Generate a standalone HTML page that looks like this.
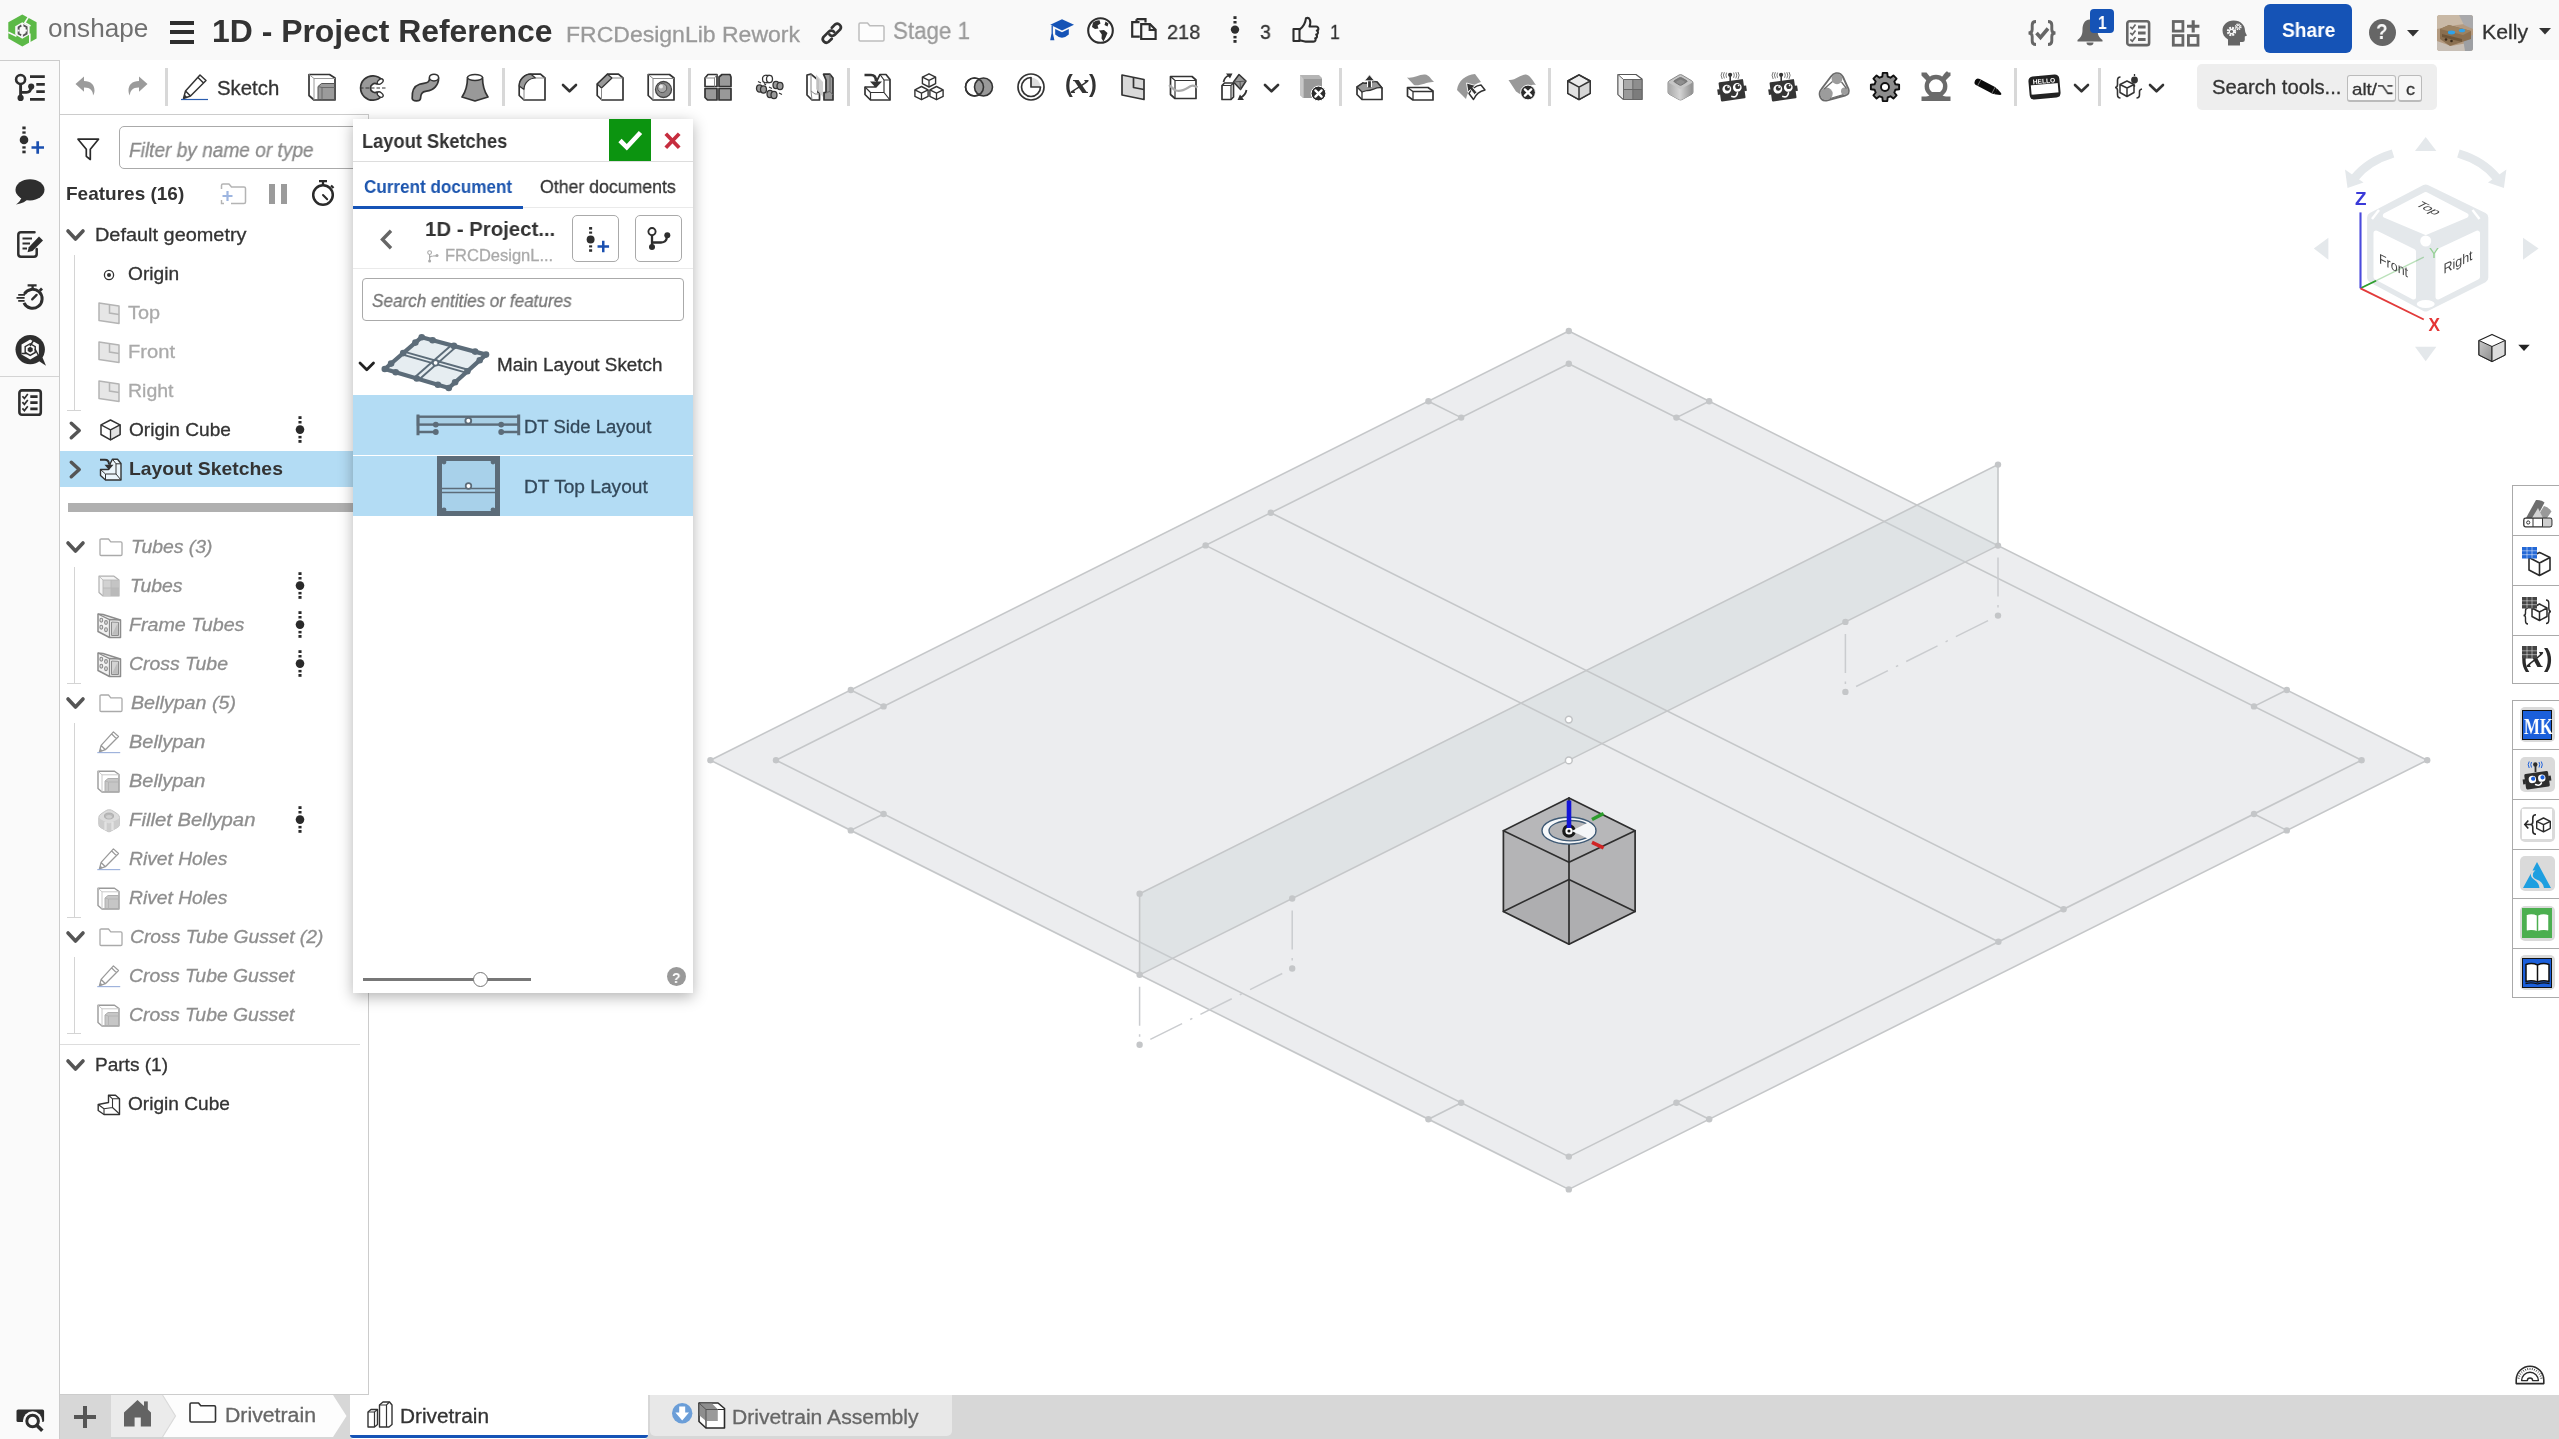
<!DOCTYPE html>
<html lang="en"><head><meta charset="utf-8"><title>1D - Project Reference | Drivetrain</title>
<style>
html,body{margin:0;padding:0;}
body{width:2559px;height:1439px;position:relative;overflow:hidden;background:#fff;
 font-family:"Liberation Sans",sans-serif;color:#333;}
.t{position:absolute;white-space:nowrap;transform-origin:0 50%;display:block;will-change:transform;-webkit-text-stroke:0.3px;}
.tb{-webkit-text-stroke:0;}
.a{position:absolute;}
svg{position:absolute;overflow:visible;}
</style></head><body>
<div class="a" style="left:0;top:0;width:2559px;height:60px;background:#f9f9f9;"></div>
<div class="a" style="left:0;top:60px;width:59px;height:1379px;background:#fafafa;border-right:1px solid #ccc;border-top:1px solid #ccc;box-sizing:content-box;"></div>
<div class="a" style="left:0;top:376px;width:59px;height:1px;background:#d4d4d4;"></div>
<svg style="left:0;top:0" width="2559" height="1439" viewBox="0 0 2559 1439">
<polygon points="1568.8,331.0 2427.2,760.2 1568.8,1189.4 710.4,760.2" fill="#ecedef" stroke="#c5c7c9" stroke-width="1.6" stroke-linejoin="round"/>
<polygon points="1568.8,363.8 2361.6,760.2 1568.8,1156.6 776.0,760.2" fill="none" stroke="#c5c7c9" stroke-width="1.6" stroke-linejoin="round"/>
<polygon points="1139.6,893.8 1998.0,464.6 1998.0,545.6 1139.6,974.8" fill="#cbd1d5" fill-opacity="0.38" stroke="none"/>
<polyline points="1139.6,974.8 1139.6,893.8 1998.0,464.6 1998.0,545.6" fill="none" stroke="#c5c7c9" stroke-width="1.6"/>
<polyline points="1139.6,974.8 1998.0,545.6" fill="none" stroke="#c5c7c9" stroke-width="1.4"/>
<polyline points="1205.6,545.4 1998.4,941.8" fill="none" stroke="#c5c7c9" stroke-width="1.6"/>
<polyline points="1270.8,512.8 2063.6,909.2" fill="none" stroke="#c5c7c9" stroke-width="1.6"/>
<polyline points="850.8,690.0 883.6,706.4" fill="none" stroke="#c5c7c9" stroke-width="1.6"/>
<polyline points="1709.2,1119.2 1676.4,1102.8" fill="none" stroke="#c5c7c9" stroke-width="1.6"/>
<polyline points="850.8,830.4 883.6,814.0" fill="none" stroke="#c5c7c9" stroke-width="1.6"/>
<polyline points="1709.2,401.2 1676.4,417.6" fill="none" stroke="#c5c7c9" stroke-width="1.6"/>
<polyline points="1428.4,401.2 1461.2,417.6" fill="none" stroke="#c5c7c9" stroke-width="1.6"/>
<polyline points="2286.8,830.4 2254.0,814.0" fill="none" stroke="#c5c7c9" stroke-width="1.6"/>
<polyline points="1428.4,1119.2 1461.2,1102.8" fill="none" stroke="#c5c7c9" stroke-width="1.6"/>
<polyline points="2286.8,690.0 2254.0,706.4" fill="none" stroke="#c5c7c9" stroke-width="1.6"/>
<polyline points="1139.6,974.8 1139.6,1044.8" fill="none" stroke="#cacccf" stroke-width="1.5" stroke-dasharray="0 12 39 8.5 2.5 200"/>
<polyline points="1292.2,898.5 1292.2,968.5" fill="none" stroke="#cacccf" stroke-width="1.5" stroke-dasharray="0 12 39 8.5 2.5 200"/>
<polyline points="1139.6,1044.8 1292.2,968.5" fill="none" stroke="#cacccf" stroke-width="1.5" stroke-dasharray="0 12 35.5 9 2.5 9 35 9 2.5 9 36 200"/>
<polyline points="1998.0,545.6 1998.0,615.6" fill="none" stroke="#cacccf" stroke-width="1.5" stroke-dasharray="0 12 39 8.5 2.5 200"/>
<polyline points="1845.4,621.9 1845.4,691.9" fill="none" stroke="#cacccf" stroke-width="1.5" stroke-dasharray="0 12 39 8.5 2.5 200"/>
<polyline points="1845.4,691.9 1998.0,615.6" fill="none" stroke="#cacccf" stroke-width="1.5" stroke-dasharray="0 12 35.5 9 2.5 9 35 9 2.5 9 36 200"/>
<circle cx="1568.8" cy="331.0" r="3.2" fill="#c4c6c8"/>
<circle cx="2427.2" cy="760.2" r="3.2" fill="#c4c6c8"/>
<circle cx="1568.8" cy="1189.4" r="3.2" fill="#c4c6c8"/>
<circle cx="710.4" cy="760.2" r="3.2" fill="#c4c6c8"/>
<circle cx="1568.8" cy="363.8" r="3.2" fill="#c4c6c8"/>
<circle cx="2361.6" cy="760.2" r="3.2" fill="#c4c6c8"/>
<circle cx="1568.8" cy="1156.6" r="3.2" fill="#c4c6c8"/>
<circle cx="776.0" cy="760.2" r="3.2" fill="#c4c6c8"/>
<circle cx="850.8" cy="690.0" r="3.2" fill="#c4c6c8"/>
<circle cx="883.6" cy="706.4" r="3.2" fill="#c4c6c8"/>
<circle cx="1709.2" cy="1119.2" r="3.2" fill="#c4c6c8"/>
<circle cx="1676.4" cy="1102.8" r="3.2" fill="#c4c6c8"/>
<circle cx="850.8" cy="830.4" r="3.2" fill="#c4c6c8"/>
<circle cx="883.6" cy="814.0" r="3.2" fill="#c4c6c8"/>
<circle cx="1709.2" cy="401.2" r="3.2" fill="#c4c6c8"/>
<circle cx="1676.4" cy="417.6" r="3.2" fill="#c4c6c8"/>
<circle cx="1428.4" cy="401.2" r="3.2" fill="#c4c6c8"/>
<circle cx="1461.2" cy="417.6" r="3.2" fill="#c4c6c8"/>
<circle cx="2286.8" cy="830.4" r="3.2" fill="#c4c6c8"/>
<circle cx="2254.0" cy="814.0" r="3.2" fill="#c4c6c8"/>
<circle cx="1428.4" cy="1119.2" r="3.2" fill="#c4c6c8"/>
<circle cx="1461.2" cy="1102.8" r="3.2" fill="#c4c6c8"/>
<circle cx="2286.8" cy="690.0" r="3.2" fill="#c4c6c8"/>
<circle cx="2254.0" cy="706.4" r="3.2" fill="#c4c6c8"/>
<circle cx="1205.6" cy="545.4" r="3.2" fill="#c4c6c8"/>
<circle cx="1270.8" cy="512.8" r="3.2" fill="#c4c6c8"/>
<circle cx="1998.4" cy="941.8" r="3.2" fill="#c4c6c8"/>
<circle cx="2063.6" cy="909.2" r="3.2" fill="#c4c6c8"/>
<circle cx="1139.6" cy="893.8" r="3.2" fill="#c4c6c8"/>
<circle cx="1998.0" cy="464.6" r="3.2" fill="#c4c6c8"/>
<circle cx="1139.6" cy="974.8" r="3.2" fill="#c4c6c8"/>
<circle cx="1998.0" cy="545.6" r="3.2" fill="#c4c6c8"/>
<circle cx="1139.6" cy="1044.8" r="3.2" fill="#c4c6c8"/>
<circle cx="1998.0" cy="615.6" r="3.2" fill="#c4c6c8"/>
<circle cx="1292.2" cy="968.5" r="3.2" fill="#c4c6c8"/>
<circle cx="1845.4" cy="691.9" r="3.2" fill="#c4c6c8"/>
<circle cx="1292.2" cy="898.5" r="3.2" fill="#c4c6c8"/>
<circle cx="1845.4" cy="621.9" r="3.2" fill="#c4c6c8"/>
<circle cx="1568.8" cy="719.6" r="3.4" fill="#fff" stroke="#c0c2c4" stroke-width="1.5"/>
<circle cx="1568.8" cy="760.4" r="3.4" fill="#fff" stroke="#c0c2c4" stroke-width="1.5"/>
<polygon points="1569.0,797.9 1635.1,830.7 1635.1,911.4 1569.0,944.2 1503.4,911.4 1503.4,830.7" fill="#b4b4b6"/>
<polygon points="1503.4,911.4 1569.0,879.5 1635.1,911.4 1569.0,944.2" fill="#aeaeb0"/>
<polygon points="1569.0,797.9 1635.1,830.7 1569.0,862.3 1503.4,830.7" fill="#b7b7b9"/>
<polygon points="1569.0,797.9 1635.1,830.7 1635.1,911.4 1569.0,944.2 1503.4,911.4 1503.4,830.7" stroke="#2e2e2e" stroke-width="1.7" fill="none" stroke-linejoin="round" stroke-linecap="round"/>
<polyline points="1503.4,830.7 1569.0,862.3 1635.1,830.7" stroke="#2e2e2e" stroke-width="1.7" fill="none" stroke-linejoin="round" stroke-linecap="round"/>
<polyline points="1569.0,797.9 1569.0,944.2" stroke="#2e2e2e" stroke-width="1.7" fill="none" stroke-linejoin="round" stroke-linecap="round"/>
<polyline points="1503.4,911.4 1569.0,879.5 1635.1,911.4" stroke="#2e2e2e" stroke-width="1.7" fill="none" stroke-linejoin="round" stroke-linecap="round"/>
<ellipse cx="1569" cy="830.7" rx="27" ry="13.4" fill="#f6f8fa" stroke="#3f5a75" stroke-width="1.4"/>
<ellipse cx="1570.8" cy="830.7" rx="21.8" ry="10.2" fill="#b4b4b6" stroke="#3f5a75" stroke-width="1.3"/>
<polygon points="1572,830.7 1588.5,822.3 1594.6,827.5 1594.6,834 1588.5,839.1" fill="#f4f6f8"/>
<circle cx="1569" cy="831" r="5.2" fill="#fff" stroke="#1a1a1a" stroke-width="3.2"/>
<circle cx="1569" cy="831" r="1.6" fill="#1a1a1a"/>
<polygon points="1571.5,831 1577.5,828.2 1577.5,833.8" fill="#f4f6f8"/>
<line x1="1569" y1="800.5" x2="1569" y2="828" stroke="#1414d8" stroke-width="4.6"/>
<line x1="1592" y1="819.5" x2="1603.6" y2="813.5" stroke="#2c9c2c" stroke-width="3.6"/>
<line x1="1592" y1="842.3" x2="1603.6" y2="847.8" stroke="#d02424" stroke-width="3.6"/>
</svg>
<span class="t" style="left:47.8px;top:15.7px;font-size:25.5px;line-height:25.5px;color:#707070;transform:scaleX(1.0251);-webkit-text-stroke:0;">onshape</span>
<span class="t tb" style="left:212.0px;top:16.4px;font-size:30.6px;line-height:30.6px;color:#333;font-weight:bold;transform:scaleX(1.0428);">1D - Project Reference</span>
<span class="t" style="left:566.0px;top:23.9px;font-size:22px;line-height:22px;color:#9a9a9a;transform:scaleX(1.0458);">FRCDesignLib Rework</span>
<span class="t" style="left:893.0px;top:20.4px;font-size:23.5px;line-height:23.5px;color:#9a9a9a;transform:scaleX(0.9505);">Stage 1</span>
<span class="t" style="left:1167.3px;top:21.5px;font-size:20.8px;line-height:20.8px;color:#333;transform:scaleX(0.9566);">218</span>
<span class="t" style="left:1259.9px;top:21.5px;font-size:20.8px;line-height:20.8px;color:#333;transform:scaleX(0.9336);">3</span>
<span class="t" style="left:1330.2px;top:21.5px;font-size:20.8px;line-height:20.8px;color:#333;transform:scaleX(0.8471);">1</span>
<div class="a" style="left:2264px;top:4px;width:88px;height:49px;background:#1553b6;border-radius:6px;"></div>
<span class="t tb" style="left:2281.9px;top:20.1px;font-size:20px;line-height:20px;color:#fff;font-weight:bold;transform:scaleX(0.9588);">Share</span>
<span class="t" style="left:2482.0px;top:20.8px;font-size:21px;line-height:21px;color:#333;transform:scaleX(1.0106);">Kelly</span>
<span class="t" style="left:216.6px;top:79.2px;font-size:19.6px;line-height:19.6px;color:#333;transform:scaleX(1.0397);">Sketch</span>
<div class="a" style="left:164.7px;top:68px;width:3px;height:38px;background:#d8d8d8;"></div>
<div class="a" style="left:502.1px;top:68px;width:3px;height:38px;background:#d8d8d8;"></div>
<div class="a" style="left:688.0px;top:68px;width:3px;height:38px;background:#d8d8d8;"></div>
<div class="a" style="left:846.8px;top:68px;width:3px;height:38px;background:#d8d8d8;"></div>
<div class="a" style="left:1338.8px;top:68px;width:3px;height:38px;background:#d8d8d8;"></div>
<div class="a" style="left:1548.4px;top:68px;width:3px;height:38px;background:#d8d8d8;"></div>
<div class="a" style="left:2014.0px;top:68px;width:3px;height:38px;background:#d8d8d8;"></div>
<div class="a" style="left:2098.0px;top:68px;width:3px;height:38px;background:#d8d8d8;"></div>
<div class="a" style="left:2197px;top:64px;width:240px;height:46px;background:#eee;border-radius:5px;"></div>
<span class="t" style="left:2212.0px;top:78.2px;font-size:19.6px;line-height:19.6px;color:#333;transform:scaleX(1.0336);">Search tools...</span>
<div class="a" style="left:2347.4px;top:75px;width:49px;height:27px;background:#f6f6f6;border:1px solid #bbb;border-bottom-width:2px;border-radius:3px;box-sizing:border-box;"></div>
<div class="a" style="left:2398px;top:75px;width:24px;height:27px;background:#f6f6f6;border:1px solid #bbb;border-bottom-width:2px;border-radius:3px;box-sizing:border-box;"></div>
<span class="t" style="left:2351.5px;top:81.1px;font-size:17px;line-height:17px;color:#333;transform:scaleX(1.1024);">alt/</span>
<span class="t" style="left:2377px;top:81px;font-size:15px;line-height:17px;color:#333;font-family:'DejaVu Sans',sans-serif;transform:scaleX(0.95);">⌥</span>
<span class="t" style="left:2405.5px;top:81.1px;font-size:17px;line-height:17px;color:#333;transform:scaleX(1.0588);">c</span>
<div class="a" style="left:60px;top:114px;width:308px;height:1279px;background:#fff;border-top:1px solid #ccc;border-right:1px solid #ccc;border-bottom:1px solid #ccc;"></div>
<div class="a" style="left:119px;top:126px;width:250px;height:43px;box-sizing:border-box;border:1px solid #aaa;border-radius:5px;background:#fff;"></div>
<span class="t" style="left:128.7px;top:139.6px;font-size:20px;line-height:20px;color:#8a8a8a;font-style:italic;transform:scaleX(0.9544);">Filter by name or type</span>
<span class="t tb" style="left:66.3px;top:184.3px;font-size:19px;line-height:19px;color:#333;font-weight:bold;">Features (16)</span>
<div class="a" style="left:60px;top:451px;width:308px;height:36px;background:#b3dcf4;"></div>
<div class="a" style="left:68px;top:503px;width:300px;height:9px;background:#b0b0b0;"></div>
<div class="a" style="left:60px;top:1044px;width:300px;height:1px;background:#ddd;"></div>
<span class="t" style="left:95.4px;top:226.0px;font-size:18.4px;line-height:18.4px;color:#333;transform:scaleX(1.0820);">Default geometry</span>
<span class="t" style="left:127.9px;top:265.0px;font-size:18.4px;line-height:18.4px;color:#333;transform:scaleX(1.0411);">Origin</span>
<span class="t" style="left:127.9px;top:304.0px;font-size:18.4px;line-height:18.4px;color:#aaa;transform:scaleX(1.0786);">Top</span>
<span class="t" style="left:127.9px;top:343.0px;font-size:18.4px;line-height:18.4px;color:#aaa;transform:scaleX(1.0944);">Front</span>
<span class="t" style="left:127.9px;top:382.0px;font-size:18.4px;line-height:18.4px;color:#aaa;transform:scaleX(1.0592);">Right</span>
<span class="t" style="left:129.0px;top:421.0px;font-size:18.4px;line-height:18.4px;color:#333;transform:scaleX(1.0389);">Origin Cube</span>
<span class="t tb" style="left:129.0px;top:460.0px;font-size:18.4px;line-height:18.4px;color:#333;font-weight:bold;transform:scaleX(1.0531);">Layout Sketches</span>
<span class="t" style="left:131.0px;top:538.0px;font-size:18.4px;line-height:18.4px;color:#8e8e8e;font-style:italic;transform:scaleX(1.0533);">Tubes (3)</span>
<span class="t" style="left:129.5px;top:577.0px;font-size:18.4px;line-height:18.4px;color:#8e8e8e;font-style:italic;transform:scaleX(1.0547);">Tubes</span>
<span class="t" style="left:129.0px;top:616.0px;font-size:18.4px;line-height:18.4px;color:#8e8e8e;font-style:italic;transform:scaleX(1.0690);">Frame Tubes</span>
<span class="t" style="left:129.0px;top:655.0px;font-size:18.4px;line-height:18.4px;color:#8e8e8e;font-style:italic;transform:scaleX(1.0562);">Cross Tube</span>
<span class="t" style="left:130.5px;top:694.0px;font-size:18.4px;line-height:18.4px;color:#8e8e8e;font-style:italic;transform:scaleX(1.0694);">Bellypan (5)</span>
<span class="t" style="left:129.0px;top:733.0px;font-size:18.4px;line-height:18.4px;color:#8e8e8e;font-style:italic;transform:scaleX(1.0838);">Bellypan</span>
<span class="t" style="left:129.0px;top:772.0px;font-size:18.4px;line-height:18.4px;color:#8e8e8e;font-style:italic;transform:scaleX(1.0838);">Bellypan</span>
<span class="t" style="left:129.0px;top:811.0px;font-size:18.4px;line-height:18.4px;color:#8e8e8e;font-style:italic;transform:scaleX(1.1044);">Fillet Bellypan</span>
<span class="t" style="left:129.0px;top:850.0px;font-size:18.4px;line-height:18.4px;color:#8e8e8e;font-style:italic;transform:scaleX(1.0470);">Rivet Holes</span>
<span class="t" style="left:129.0px;top:889.0px;font-size:18.4px;line-height:18.4px;color:#8e8e8e;font-style:italic;transform:scaleX(1.0470);">Rivet Holes</span>
<span class="t" style="left:130.0px;top:928.0px;font-size:18.4px;line-height:18.4px;color:#8e8e8e;font-style:italic;transform:scaleX(1.0474);">Cross Tube Gusset (2)</span>
<span class="t" style="left:129.0px;top:967.0px;font-size:18.4px;line-height:18.4px;color:#8e8e8e;font-style:italic;transform:scaleX(1.0532);">Cross Tube Gusset</span>
<span class="t" style="left:129.0px;top:1006.0px;font-size:18.4px;line-height:18.4px;color:#8e8e8e;font-style:italic;transform:scaleX(1.0532);">Cross Tube Gusset</span>
<span class="t" style="left:95.0px;top:1056.0px;font-size:18.4px;line-height:18.4px;color:#333;transform:scaleX(1.0348);">Parts (1)</span>
<span class="t" style="left:127.5px;top:1095.0px;font-size:18.4px;line-height:18.4px;color:#333;transform:scaleX(1.0389);">Origin Cube</span>
<div class="a" style="left:74px;top:255px;width:1px;height:155px;background:#d4d4d4;"></div>
<div class="a" style="left:67px;top:410px;width:14px;height:1px;background:#d4d4d4;"></div>
<div class="a" style="left:74px;top:567px;width:1px;height:116px;background:#d4d4d4;"></div>
<div class="a" style="left:67px;top:683px;width:14px;height:1px;background:#d4d4d4;"></div>
<div class="a" style="left:74px;top:723px;width:1px;height:194px;background:#d4d4d4;"></div>
<div class="a" style="left:67px;top:917px;width:14px;height:1px;background:#d4d4d4;"></div>
<div class="a" style="left:74px;top:957px;width:1px;height:76px;background:#d4d4d4;"></div>
<div class="a" style="left:67px;top:1033px;width:14px;height:1px;background:#d4d4d4;"></div>
<div class="a" style="left:60px;top:1395px;width:2499px;height:44px;background:#d7d7d7;"></div>
<svg style="left:0;top:0" width="2559" height="1439"><polygon points="111,1397 163,1397 176,1418 163,1439 111,1439" fill="#cfcfcf" opacity="0.6"/><polygon points="111,1395 162.5,1395 175.5,1416 162.5,1437 111,1437" fill="#ebebeb"/><polygon points="162.5,1395 333,1395 346.5,1416 333,1437 162.5,1437 175.5,1416" fill="#fdfdfd"/><polyline points="162.5,1395 175.5,1416 162.5,1437" fill="none" stroke="#dadada" stroke-width="1.2"/></svg>
<span class="t" style="left:225.0px;top:1405.1px;font-size:20px;line-height:20px;color:#666;transform:scaleX(1.0633);">Drivetrain</span>
<div class="a" style="left:350px;top:1395px;width:298px;height:44px;background:#fff;border-radius:0 0 4px 4px;"></div>
<div class="a" style="left:350px;top:1435px;width:298px;height:3px;background:#1553b6;border-radius:0 0 3px 3px;"></div>
<span class="t" style="left:399.6px;top:1406.3px;font-size:20px;line-height:20px;color:#333;transform:scaleX(1.0400);">Drivetrain</span>
<div class="a" style="left:649.5px;top:1395px;width:302.5px;height:40.5px;background:#e8e8e8;border-radius:0 0 5px 5px;"></div>
<span class="t" style="left:732.0px;top:1406.7px;font-size:20px;line-height:20px;color:#666;transform:scaleX(1.0559);">Drivetrain Assembly</span>
<div class="a" style="left:0;top:1395px;width:59px;height:44px;background:#fafafa;"></div>
<div class="a" style="left:353px;top:119px;width:340px;height:874px;background:#fff;box-shadow:0 4px 14px rgba(0,0,0,0.3);"></div>
<div class="a" style="left:353px;top:161px;width:340px;height:1px;background:#ddd;"></div>
<span class="t tb" style="left:362.4px;top:131.6px;font-size:19.8px;line-height:19.8px;color:#333;font-weight:bold;transform:scaleX(0.9240);">Layout Sketches</span>
<div class="a" style="left:609px;top:119px;width:42px;height:42px;background:#0c9410;"></div>
<div class="a" style="left:353px;top:207px;width:340px;height:1px;background:#eaeaea;"></div>
<div class="a" style="left:353px;top:206px;width:170px;height:3px;background:#1553b6;"></div>
<span class="t tb" style="left:363.7px;top:177.9px;font-size:18px;line-height:18px;color:#1c55ae;font-weight:bold;transform:scaleX(0.9493);">Current document</span>
<span class="t" style="left:539.8px;top:177.9px;font-size:18px;line-height:18px;color:#333;transform:scaleX(0.9836);">Other documents</span>
<span class="t tb" style="left:424.7px;top:218.2px;font-size:21px;line-height:21px;color:#333;font-weight:bold;transform:scaleX(0.9709);">1D - Project...</span>
<span class="t" style="left:444.7px;top:247.0px;font-size:16.5px;line-height:16.5px;color:#aaa;">FRCDesignL...</span>
<div class="a" style="left:572px;top:215px;width:47px;height:47px;box-sizing:border-box;border:1px solid #aaa;border-radius:5px;background:#fff;"></div>
<div class="a" style="left:635px;top:215px;width:47px;height:47px;box-sizing:border-box;border:1px solid #aaa;border-radius:5px;background:#fff;"></div>
<div class="a" style="left:353px;top:268px;width:340px;height:1px;background:#eaeaea;"></div>
<div class="a" style="left:362px;top:278px;width:322px;height:43px;box-sizing:border-box;border:1px solid #aaa;border-radius:4px;background:#fff;"></div>
<span class="t" style="left:372.0px;top:293.4px;font-size:17.5px;line-height:17.5px;color:#777;font-style:italic;transform:scaleX(0.9776);">Search entities or features</span>
<span class="t" style="left:497.4px;top:355.6px;font-size:18px;line-height:18px;color:#333;transform:scaleX(1.0462);">Main Layout Sketch</span>
<div class="a" style="left:353px;top:395px;width:340px;height:60px;background:#b3dcf4;"></div>
<div class="a" style="left:353px;top:456px;width:340px;height:60px;background:#b3dcf4;"></div>
<span class="t" style="left:524.3px;top:417.5px;font-size:18px;line-height:18px;color:#33485a;transform:scaleX(1.0287);">DT Side Layout</span>
<span class="t" style="left:524.3px;top:478.2px;font-size:18px;line-height:18px;color:#33485a;transform:scaleX(1.0634);">DT Top Layout</span>
<div class="a" style="left:363px;top:977.8px;width:168px;height:3px;background:#777;"></div>
<div class="a" style="left:472.5px;top:971.5px;width:15px;height:15px;box-sizing:border-box;border:1.5px solid #777;border-radius:50%;background:#fff;"></div>
<div class="a" style="left:667px;top:967px;width:19px;height:19px;border-radius:50%;background:#999;"></div>
<span class="t tb" style="left:672.3px;top:969.6px;font-size:15px;line-height:15px;color:#fff;font-weight:bold;transform:scaleX(0.9277);">?</span>
<svg style="left:308.0px;top:73.0px" width="28" height="28" viewBox="0 0 28 28"><path d="M1,1.5 L21.5,1.5 L27,5 L27,27 L6,27 L1,22.5 Z" fill="#fff" stroke="#333" stroke-width="1.7" stroke-linejoin="round" stroke-linecap="round"/>
<path d="M1,1.5 L6,5.5 L27,5.5 M6,5.5 L6,27" fill="none" stroke="#9a9a9a" stroke-width="1"/>
<path d="M10,13.5 L13.5,10.5 L26.5,10.5 L26.5,26.5 L10,26.5 Z" fill="#9b9b9b" stroke="#555" stroke-width="1"/>
<path d="M10,13.5 L14,14.5 L26.5,14.5 M14,14.5 L14,26.5" fill="none" stroke="#6a6a6a" stroke-width="1"/></svg>
<svg style="left:359.5px;top:73.5px" width="28" height="28" viewBox="0 0 28 28"><path d="M22,6 A12.2,12.2 0 1 0 22,22 L17,18 A4.5,4.5 0 1 1 17,10 Z" fill="#999" stroke="#333" stroke-width="1.7" stroke-linejoin="round" stroke-linecap="round"/>
<ellipse cx="20.2" cy="7.6" rx="3.4" ry="2.1" transform="rotate(-38 20.2 7.6)" fill="#fff" stroke="#333" stroke-width="1.3"/>
<ellipse cx="20.2" cy="20.6" rx="3.4" ry="2.1" transform="rotate(38 20.2 20.6)" fill="#fff" stroke="#333" stroke-width="1.3"/>
<line x1="0" y1="14" x2="27.5" y2="14" stroke="#333" stroke-width="1.2" stroke-dasharray="3.5 2"/></svg>
<svg style="left:410.7px;top:73.4px" width="28" height="28" viewBox="0 0 28 28"><path d="M18.5,5.2 C18.5,11 14,9.5 8.5,11.2 C2.5,13.2 0.8,19 1.2,25.5 C1.5,28.5 9,28.8 9.5,25.6 C9.8,21 10.5,18.8 15.5,18.2 C23,17.2 27.6,12 27.6,5 Z" fill="#999" stroke="#333" stroke-width="1.7" stroke-linejoin="round" stroke-linecap="round"/>
<ellipse cx="23" cy="4.6" rx="4.6" ry="3.4" fill="#fff" stroke="#333" stroke-width="1.5"/></svg>
<svg style="left:461.0px;top:73.3px" width="28" height="28" viewBox="0 0 28 28"><path d="M6.5,4.5 C6.5,14 4.5,19 1,24 L14,28 L27,24 C23.5,19 21.5,14 21.5,4.5 Z" fill="#999" stroke="#333" stroke-width="1.7" stroke-linejoin="round" stroke-linecap="round"/>
<ellipse cx="14" cy="4.5" rx="7.5" ry="3" fill="#fff" stroke="#333" stroke-width="1.5"/></svg>
<svg style="left:518.0px;top:73.0px" width="28" height="28" viewBox="0 0 28 28"><path d="M13,1.2 L22.5,1.2 L27,5 L27,27 L6,27 L1.2,22.5 L1.2,13 A12,12 0 0 1 13,1.2 Z" fill="#fff" stroke="#333" stroke-width="1.7" stroke-linejoin="round" stroke-linecap="round"/>
<path d="M13,1.2 A12,12 0 0 0 1.2,13 L6,16.5 A11.5,11.5 0 0 1 17.5,5 Z" fill="#999" stroke="#333" stroke-width="1.2" stroke-linejoin="round"/>
<path d="M17.5,5 L27,5 M6,16.5 L6,27" fill="none" stroke="#888" stroke-width="1"/></svg>
<svg style="left:596.0px;top:73.0px" width="28" height="28" viewBox="0 0 28 28"><path d="M11.5,1.2 L22.5,1.2 L27,5 L27,27 L6,27 L1.2,22.5 L1.2,11 Z" fill="#fff" stroke="#333" stroke-width="1.7" stroke-linejoin="round" stroke-linecap="round"/>
<path d="M11.5,1.2 L1.2,11 L5.5,15 L16,5 Z" fill="#999" stroke="#333" stroke-width="1.2" stroke-linejoin="round"/>
<path d="M16,5 L27,5 M5.5,15 L5.5,27" fill="none" stroke="#888" stroke-width="1"/></svg>
<svg style="left:647.0px;top:73.0px" width="28" height="28" viewBox="0 0 28 28"><path d="M1.2,1.5 L22.5,1.5 L27,5 L27,27 L6,27 L1.2,22.5 Z" fill="#fff" stroke="#333" stroke-width="1.7" stroke-linejoin="round" stroke-linecap="round"/>
<path d="M1.2,1.5 L6,5.5 L27,5.5 M6,5.5 L6,27" fill="none" stroke="#888" stroke-width="1"/>
<circle cx="16.5" cy="16.5" r="8" fill="#8c8c8c" stroke="#444" stroke-width="1.3"/>
<circle cx="15.2" cy="15" r="4.6" fill="#aaa" stroke="#555" stroke-width="1"/>
<circle cx="14" cy="13.6" r="2" fill="#e8e8e8"/></svg>
<svg style="left:704.0px;top:73.0px" width="28" height="28" viewBox="0 0 28 28"><g stroke="#333" stroke-width="1.7" stroke-linejoin="round" stroke-linecap="round"><path d="M1,5 L4,1.5 L13,1.5 L13,13.5 L1,13.5 Z" fill="#fff"/>
<path d="M15,4 L18,1.5 L26,1.5 L27,4 L27,13.5 L15,13.5 Z" fill="#999"/>
<path d="M1,15.5 L13,15.5 L13,27 L3.5,27 L1,24.5 Z" fill="#999"/>
<path d="M15,15.5 L27,15.5 L27,27 L15,27 Z" fill="#999"/></g>
<path d="M1,5 L10.5,5 L13,1.5 M10.5,5 L10.5,13.5" fill="none" stroke="#888" stroke-width="1"/></svg>
<svg style="left:755.0px;top:73.5px" width="28" height="28" viewBox="0 0 28 28"><g stroke="#333" stroke-width="1.3">
<g fill="#fff"><ellipse cx="10.5" cy="5" rx="3" ry="3.6"/><rect x="10.5" y="1.4" width="4" height="7.2" stroke="none"/><path d="M10.5,1.4 L14.5,1.4 M10.5,8.6 L14.5,8.6" /><ellipse cx="14.5" cy="5" rx="3" ry="3.6"/></g>
<g fill="#999"><ellipse cx="4.5" cy="14.5" rx="3" ry="3.6"/><ellipse cx="8.5" cy="15.5" rx="3" ry="3.6"/>
<ellipse cx="21" cy="11" rx="3" ry="3.6"/><ellipse cx="25" cy="12" rx="3" ry="3.6"/>
<ellipse cx="15" cy="20" rx="3" ry="3.6"/><ellipse cx="19" cy="21" rx="3" ry="3.6"/></g></g>
<path d="M3,7.5 L6,9 M14,13 L17,14.5 M24,19 L27,20.5 M9,9.5 L11,11" stroke="#333" stroke-width="1.1" fill="none"/></svg>
<svg style="left:806.0px;top:73.0px" width="28" height="28" viewBox="0 0 28 28"><path d="M1,2 L5,1.2 L12,7 L12,19.5 L13.5,19.5 L13.5,27 L6,27 L1,22 Z" fill="#fff" stroke="#333" stroke-width="1.7" stroke-linejoin="round" stroke-linecap="round"/>
<path d="M5,1.2 L5,18 L6,27 M5,18 L9,21 L13.5,21" fill="none" stroke="#888" stroke-width="1"/>
<path d="M10,1.5 L17,9 L17,24 L10,16 Z" fill="#ccc" opacity="0.9"/>
<path d="M17.5,1.2 L24,1.2 L27,5 L27,27 L18,27 L18,19.5 L20,19.5 L20,7 Z" fill="#999" stroke="#333" stroke-width="1.7" stroke-linejoin="round" stroke-linecap="round"/>
<path d="M24,1.2 L24,18.5 L20,19.5 M24,18.5 L27,22" fill="none" stroke="#666" stroke-width="1"/></svg>
<svg style="left:863.0px;top:73.0px" width="28" height="28" viewBox="0 0 28 28"><path d="M14.5,6.5 L17,1.5 L23,1.5 L27,6.5 L27,27 L7.5,27 L2,21.5 L2,14 L12,14 Z" fill="#fff" stroke="#333" stroke-width="1.7" stroke-linejoin="round" stroke-linecap="round"/>
<path d="M17,1.5 L21,7 L27,7 M21,7 L21,19.5 L7.5,19.5 L2,14 M7.5,19.5 L7.5,27 M21,19.5 L27,27" fill="none" stroke="#333" stroke-width="1.2" stroke-linejoin="round"/>
<path d="M1.5,2 L8,2 Q13,2 13,8" fill="none" stroke="#333" stroke-width="2.6"/>
<path d="M7,8.5 L19,8.5 L13,15 Z" fill="#333"/></svg>
<svg style="left:914.0px;top:73.0px" width="28" height="28" viewBox="0 0 28 28"><path d="M15,0.8 L21.6,4.1 L21.6,10.7 L15,14.0 L8.4,10.7 L8.4,4.1 Z" fill="#fff" stroke="#333" stroke-width="1.4" stroke-linejoin="round"/><path d="M8.4,4.1 L15,7.3999999999999995 L21.6,4.1 M15,7.3999999999999995 L15,14.0" fill="none" stroke="#333" stroke-width="1.3" stroke-linejoin="round"/><path d="M7.5,13.5 L14.1,16.8 L14.1,23.4 L7.5,26.700000000000003 L0.9000000000000004,23.4 L0.9000000000000004,16.8 Z" fill="#fff" stroke="#333" stroke-width="1.4" stroke-linejoin="round"/><path d="M0.9000000000000004,16.8 L7.5,20.1 L14.1,16.8 M7.5,20.1 L7.5,26.700000000000003" fill="none" stroke="#333" stroke-width="1.3" stroke-linejoin="round"/><path d="M22.5,13.5 L29.1,16.8 L29.1,23.4 L22.5,26.700000000000003 L15.9,23.4 L15.9,16.8 Z" fill="#fff" stroke="#333" stroke-width="1.4" stroke-linejoin="round"/><path d="M15.9,16.8 L22.5,20.1 L29.1,16.8 M22.5,20.1 L22.5,26.700000000000003" fill="none" stroke="#333" stroke-width="1.3" stroke-linejoin="round"/></svg>
<svg style="left:965.0px;top:77.0px" width="28" height="20" viewBox="0 0 28 20"><circle cx="9.5" cy="10" r="9" fill="#fff" stroke="#333" stroke-width="1.6"/>
<circle cx="18.5" cy="10" r="9" fill="#999" stroke="#333" stroke-width="1.6"/>
<circle cx="9.5" cy="10" r="9" fill="none" stroke="#333" stroke-width="1.6"/></svg>
<svg style="left:1016.5px;top:73.0px" width="28" height="28" viewBox="0 0 28 28"><circle cx="14" cy="14" r="13" fill="#fff" stroke="#333" stroke-width="1.7"/>
<path d="M14,14 L14,4.5 A9.5,9.5 0 0 1 23.5,14 Z" fill="#ddd"/>
<path d="M14,4.5 A9.5,9.5 0 1 0 23.5,14 L14,14 Z" fill="#fff" stroke="#333" stroke-width="1.7" stroke-linejoin="round"/></svg>
<svg style="left:1120.6px;top:73.5px" width="24" height="27" viewBox="0 0 24 27"><path d="M1,1 L23,5.5 L23,25.5 L1,21 Z" fill="#d9d9d9" stroke="#333" stroke-width="1.7" stroke-linejoin="round"/>
<path d="M12.5,3.5 L12.5,13.5 L23,15.5" fill="none" stroke="#333" stroke-width="1.7" stroke-linejoin="round"/></svg>
<svg style="left:1168.5px;top:75.0px" width="29" height="25" viewBox="0 0 29 25"><path d="M1.5,1.5 L23,1.5 L27,5 L27,23.5 L6,23.5 L1.5,19.5 Z" fill="#fff" stroke="#333" stroke-width="1.7" stroke-linejoin="round" stroke-linecap="round"/>
<path d="M1.5,1.5 L6,5.5 L27,5.5 M6,5.5 L6,23.5" fill="none" stroke="#333" stroke-width="1.2"/>
<path d="M0,10 C3,12 4,14.5 7,15.5 C13,17.5 18,13 22,11 C24.5,9.8 26.5,11 28.5,12.5" fill="none" stroke="#aaa" stroke-width="2.2"/></svg>
<svg style="left:1220.4px;top:73.0px" width="28" height="28" viewBox="0 0 28 28"><path d="M2,12.5 L4.5,10 L13.5,10 L13.5,24 L11,26.5 L2,26.5 Z" fill="#fff" stroke="#333" stroke-width="1.7" stroke-linejoin="round" stroke-linecap="round"/>
<path d="M2,12.5 L11,12.5 L13.5,10 M11,12.5 L11,26.5" fill="none" stroke="#333" stroke-width="1.2"/>
<path d="M19,1.5 L26,8 L20.5,16.5 L13.5,9 Z" fill="#999" stroke="#333" stroke-width="1.5" stroke-linejoin="round"/>
<path d="M13.5,9 L20,8.5 L26,8 M20,8.5 L20.5,16.5" fill="none" stroke="#555" stroke-width="1"/>
<path d="M3.5,9 Q4.5,4 9,2.5" fill="none" stroke="#333" stroke-width="1.8"/><path d="M6,0.5 L12.5,0.5 L10,5.5 Z" fill="#333"/>
<path d="M26.5,17 Q25.5,22 21,24.5" fill="none" stroke="#333" stroke-width="1.8"/><path d="M24,27 L17.5,27 L20,21.5 Z" fill="#333"/></svg>
<svg style="left:1298.7px;top:73.5px" width="28" height="28" viewBox="0 0 28 28"><path d="M1,1 L20,1 L23,4 L23,24 L4,24 L1,21 Z" fill="#b5b5b5"/>
<path d="M4.5,5 L23,5 L23,24 L4.5,24 Z" fill="#999"/>
<path d="M1,1 L4.5,5 L4.5,24 L1,21 Z" fill="#c8c8c8"/><circle cx="19.5" cy="19.5" r="7.4" fill="#2b2b2b" stroke="#fff" stroke-width="1"/><path d="M16.392,16.392 L22.608,22.608 M22.608,16.392 L16.392,22.608" stroke="#fff" stroke-width="2.3" stroke-linecap="round"/></svg>
<svg style="left:1354.8px;top:74.0px" width="28" height="28" viewBox="0 0 28 28"><path d="M2,13 L8,9 C12,11 17,6 22,8 L27,14 L27,25.5 L7,25.5 L2,20.5 Z" fill="#fff" stroke="#333" stroke-width="1.7" stroke-linejoin="round" stroke-linecap="round"/>
<path d="M2,13 L8,9 C12,11 17,6 22,8 L27,14 C22,12 17,17 12,16.5 L7,18 Z" fill="#999" stroke="#333" stroke-width="1.3" stroke-linejoin="round"/>
<path d="M7,18 L7,25.5" stroke="#333" stroke-width="1.3"/>
<path d="M14.5,13 L14.5,6" stroke="#fff" stroke-width="5"/><path d="M14.5,13.5 L14.5,6" stroke="#333" stroke-width="2.8"/>
<path d="M9.5,6.8 L14.5,0.8 L19.5,6.8 Z" fill="#333" stroke="#fff" stroke-width="0.8"/></svg>
<svg style="left:1405.5px;top:73.0px" width="28" height="28" viewBox="0 0 28 28"><path d="M1,4.5 C7,6 13,1 19,1.5 C23,2 25,6 28,9 C22,8 14,13.5 8,12 Z" fill="#999"/>
<path d="M1.5,14.5 L22,14.5 L27,18 L27,27 L7,27 L1.5,23 Z" fill="#fff" stroke="#333" stroke-width="1.7" stroke-linejoin="round" stroke-linecap="round"/>
<path d="M1.5,14.5 L7,18.5 L27,18.5 M7,18.5 L7,27" fill="none" stroke="#333" stroke-width="1.3"/></svg>
<svg style="left:1455.7px;top:73.0px" width="30" height="28" viewBox="0 0 30 28"><path d="M1,17 C2,8 10,1.5 19,1 L25,9 C17,11 12,17 10,26 Z" fill="#999"/>
<path d="M13,20.5 C16,15 20.5,12.5 25,12 L29,17 C24,18 20,21 17.5,26.5 Z" fill="#fff" stroke="#333" stroke-width="1.5" stroke-linejoin="round"/>
<path d="M10.5,10 L19.5,12.5 L16.8,14.6 L21,19.5 L18.5,21.5 L14.5,16.6 L12,19 Z" fill="#333" stroke="#fff" stroke-width="0.9"/></svg>
<svg style="left:1507.5px;top:73.0px" width="28" height="28" viewBox="0 0 28 28"><path d="M0.5,7 C7,8 12,1.5 18,1.5 C22,2 25,8 28,12 C23,10.5 17,15 14,22 C10,20 9,19 8,18.5 Z" fill="#999"/><circle cx="20" cy="19.5" r="7.4" fill="#2b2b2b" stroke="#fff" stroke-width="1"/><path d="M16.892,16.392 L23.108,22.608 M23.108,16.392 L16.892,22.608" stroke="#fff" stroke-width="2.3" stroke-linecap="round"/></svg>
<svg style="left:1567.0px;top:73.8px" width="24" height="26.5" viewBox="0 0 24 26.5"><path d="M12,0.9 L23.2,7 L23.2,19.3 L12,25.6 L0.8,19.3 L0.8,7 Z" fill="#ececec" stroke="#333" stroke-width="1.5" stroke-linejoin="round"/>
<path d="M0.8,7 L12,13.2 L12,25.6 L0.8,19.3 Z" fill="#e2e2e2"/><path d="M12,13.2 L23.2,7 L23.2,19.3 L12,25.6 Z" fill="#d6d6d6"/>
<path d="M12,0.9 L23.2,7 L23.2,19.3 L12,25.6 L0.8,19.3 L0.8,7 Z M0.8,7 L12,13.2 L23.2,7 M12,13.2 L12,25.6" fill="none" stroke="#333" stroke-width="1.5" stroke-linejoin="round"/></svg>
<svg style="left:1617.0px;top:73.0px" width="26" height="28" viewBox="0 0 26 28"><path d="M1,1.5 L19,1.5 L25,6 L25,26.5 L6.5,26.5 L1,21.5 Z" fill="#fff" stroke="#555" stroke-width="1.2" stroke-linejoin="round"/>
<path d="M1,1.5 L6.5,6.5 L6.5,26.5 L1,21.5 Z" fill="#e8e8e8" stroke="#666" stroke-width="1"/>
<rect x="6.5" y="6.5" width="9.3" height="10" fill="#aaa"/><rect x="15.8" y="6.5" width="9.2" height="10" fill="#8e8e8e"/>
<rect x="6.5" y="16.5" width="9.3" height="10" fill="#999"/><rect x="15.8" y="16.5" width="9.2" height="10" fill="#7c7c7c"/>
<path d="M6.5,6.5 L25,6.5 L25,26.5 L6.5,26.5 Z M15.8,6.5 L15.8,26.5 M6.5,16.5 L25,16.5" fill="none" stroke="#666" stroke-width="1"/></svg>
<svg style="left:1668.3px;top:73.8px" width="25" height="26.5" viewBox="0 0 25 26.5"><defs><linearGradient id="hcl" x1="0" x2="1" y1="0" y2="0"><stop offset="0" stop-color="#a8a8a8"/><stop offset="1" stop-color="#d6d6d6"/></linearGradient>
<linearGradient id="hcr" x1="0" x2="1" y1="0" y2="0"><stop offset="0" stop-color="#d0d0d0"/><stop offset="1" stop-color="#8e8e8e"/></linearGradient></defs>
<path d="M11,1 Q12.5,0.2 14,1 L23.8,6.8 Q25,7.6 25,9 L25,18 Q25,19.5 23.8,20.2 L14,25.6 Q12.5,26.4 11,25.6 L1.2,20.2 Q0,19.5 0,18 L0,9 Q0,7.6 1.2,6.8 Z" fill="#c6c6c6" stroke="#8a8a8a" stroke-width="1"/>
<path d="M0.3,8.6 L12.5,15.2 L12.5,26 Q11.8,26 11,25.6 L1.2,20.2 Q0.3,19.5 0.3,18 Z" fill="url(#hcl)"/>
<path d="M24.7,8.6 L12.5,15.2 L12.5,26 Q13.2,26 14,25.6 L23.8,20.2 Q24.7,19.5 24.7,18 Z" fill="url(#hcr)"/>
<path d="M12.5,3.6 Q13,3.4 13.6,3.7 L18.6,6.6 Q19.6,7.3 18.6,8 L13.6,11 Q12.5,11.6 11.4,11 L6.4,8 Q5.4,7.3 6.4,6.6 L11.4,3.7 Q12,3.4 12.5,3.6 Z" fill="#7c7c7c" stroke="#6a6a6a" stroke-width="0.8"/>
<path d="M8.5,7.6 L12.5,5.6 L16.5,7.6 L16.5,8.8 L12.5,11 L8.5,8.8 Z" fill="#8e8e8e"/></svg>
<svg style="left:1717.0px;top:72.0px" width="30" height="28.5" viewBox="0 0 30 28.5"><g transform="rotate(-8 15 18)"><rect x="2.6" y="8.6" width="24.8" height="19.4" rx="1.2" fill="#353535"/>
<rect x="0.4" y="15.5" width="2.6" height="5.4" fill="#353535"/><rect x="27" y="15.5" width="2.6" height="5.4" fill="#353535"/>
<circle cx="10" cy="16.4" r="4.4" fill="#fff"/><circle cx="20.6" cy="16.2" r="4.4" fill="#fff"/>
<circle cx="10.6" cy="15.6" r="2.5" fill="#353535"/><circle cx="21.2" cy="15.4" r="2.5" fill="#353535"/>
<circle cx="11.6" cy="14.5" r="0.9" fill="#fff"/><circle cx="22.2" cy="14.3" r="0.9" fill="#fff"/>
<path d="M14,24.4 Q18.6,26.6 20,21.6" fill="none" stroke="#fff" stroke-width="1.7" stroke-linecap="round"/></g>
<path d="M13.2,9 L13.2,4" stroke="#353535" stroke-width="1.6"/><circle cx="13.1" cy="2.8" r="2.1" fill="#353535"/>
<path d="M9.6,0.6 Q8.2,3 9.6,5.8 M7.4,0.2 Q5.4,3 7.4,6.4 M5.2,0 Q3,3 5.2,7 M16.6,0.6 Q18,3 16.6,5.8 M18.8,0.2 Q20.8,3 18.8,6.4 M21,0 Q23.2,3 21,7" fill="none" stroke="#555" stroke-width="0.8"/></svg>
<svg style="left:1767.9px;top:72.0px" width="30" height="28.5" viewBox="0 0 30 28.5"><g transform="rotate(-8 15 18)"><rect x="2.6" y="8.6" width="24.8" height="19.4" rx="1.2" fill="#353535"/>
<rect x="0.4" y="15.5" width="2.6" height="5.4" fill="#353535"/><rect x="27" y="15.5" width="2.6" height="5.4" fill="#353535"/>
<circle cx="10" cy="16.4" r="4.4" fill="#fff"/><circle cx="20.6" cy="16.2" r="4.4" fill="#fff"/>
<circle cx="10.6" cy="15.6" r="2.5" fill="#353535"/><circle cx="21.2" cy="15.4" r="2.5" fill="#353535"/>
<circle cx="11.6" cy="14.5" r="0.9" fill="#fff"/><circle cx="22.2" cy="14.3" r="0.9" fill="#fff"/>
<path d="M14,24.4 Q18.6,26.6 20,21.6" fill="none" stroke="#fff" stroke-width="1.7" stroke-linecap="round"/></g>
<path d="M13.2,9 L13.2,4" stroke="#353535" stroke-width="1.6"/><circle cx="13.1" cy="2.8" r="2.1" fill="#353535"/>
<path d="M9.6,0.6 Q8.2,3 9.6,5.8 M7.4,0.2 Q5.4,3 7.4,6.4 M5.2,0 Q3,3 5.2,7 M16.6,0.6 Q18,3 16.6,5.8 M18.8,0.2 Q20.8,3 18.8,6.4 M21,0 Q23.2,3 21,7" fill="none" stroke="#555" stroke-width="0.8"/></svg>
<svg style="left:1818.5px;top:71.5px" width="31" height="30" viewBox="0 0 31 30"><path d="M17,1.2 Q21.5,0.5 24,5 L29.5,17 Q31,22 26,23.5 L8.5,28.3 Q2,29.5 0.8,23.5 Q0,20 2.5,17 L12,4.5 Q14,1.8 17,1.2 Z" fill="#fff" stroke="#6a6a6a" stroke-width="1.9"/>
<circle cx="18" cy="6.8" r="5.4" fill="#9c9c9c"/><circle cx="7.5" cy="21.8" r="6.2" fill="#9c9c9c"/><circle cx="25.6" cy="19.2" r="3.6" fill="#9c9c9c"/>
<path d="M13.5,9.5 L5,17 M22.5,10 L27.5,16.5 M11,26.5 L24.5,22.6" stroke="#6a6a6a" stroke-width="1.3" fill="none"/></svg>
<svg style="left:1869.8px;top:71.5px" width="30" height="30" viewBox="0 0 30 30"><path d="M12.76,0.88 L17.24,0.88 L17.69,4.54 L20.50,5.70 L23.41,3.43 L26.57,6.59 L24.30,9.50 L25.46,12.31 L29.12,12.76 L29.12,17.24 L25.46,17.69 L24.30,20.50 L26.57,23.41 L23.41,26.57 L20.50,24.30 L17.69,25.46 L17.24,29.12 L12.76,29.12 L12.31,25.46 L9.50,24.30 L6.59,26.57 L3.43,23.41 L5.70,20.50 L4.54,17.69 L0.88,17.24 L0.88,12.76 L4.54,12.31 L5.70,9.50 L3.43,6.59 L6.59,3.43 L9.50,5.70 L12.31,4.54 Z" fill="#8e8e8e" stroke="#111" stroke-width="1.9" stroke-linejoin="round"/>
<circle cx="15" cy="15" r="4" fill="#fff" stroke="#111" stroke-width="1.9"/></svg>
<svg style="left:1921.2px;top:71.5px" width="30" height="30" viewBox="0 0 30 30"><path d="M0.5,24.5 L29.5,24.5 L29.5,29 L0.5,29 Z" fill="#6a6a6a"/>
<path d="M5,25 Q9.5,24 10,20 L20,20 Q20.5,24 25,25 Z" fill="#6a6a6a"/>
<circle cx="15" cy="14.2" r="9.2" fill="none" stroke="#6a6a6a" stroke-width="4.4"/>
<path d="M0.5,0.5 L5.5,0.5 L10,6 L6.5,9.5 L0.5,3.5 Z M29.5,0.5 L24.5,0.5 L20,6 L23.5,9.5 L29.5,3.5 Z" fill="#6a6a6a"/>
<path d="M22.5,3 L26,-1 L29.5,4 Z" fill="#6a6a6a"/></svg>
<svg style="left:1974.5px;top:78.3px" width="26" height="18" viewBox="0 0 26 18"><g transform="rotate(28 12.5 9)"><rect x="-1.5" y="5.5" width="24" height="7.2" rx="3.4" fill="#0a0a0a"/>
<path d="M22,6 L27.5,8 Q28.6,9 27.5,10 L22,12.2 Z" fill="#0a0a0a"/>
<path d="M3.2,5.6 L3.2,12.6 M19.3,5.6 L19.3,12.6" stroke="#777" stroke-width="0.9"/></g></svg>
<svg style="left:2028.8px;top:75.0px" width="31" height="24" viewBox="0 0 31 24"><g transform="rotate(-5 15.5 12)"><rect x="1" y="1.5" width="29" height="21" rx="3.5" fill="#fff" stroke="#222" stroke-width="2"/>
<path d="M1,5 Q1,1.5 4.5,1.5 L26.5,1.5 Q30,1.5 30,5 L30,9.2 L1,9.2 Z" fill="#222"/>
<rect x="1" y="18.6" width="29" height="3.9" fill="#222"/>
<text x="15.5" y="8.3" font-size="6.6" font-weight="bold" fill="#fff" text-anchor="middle" font-family="Liberation Sans, sans-serif">HELLO</text></g></svg>
<svg style="left:2113.5px;top:74.0px" width="29" height="26" viewBox="0 0 29 26"><path d="M6.5,3 Q3.5,3 3.5,6.5 L3.5,10.5 Q3.5,13.5 1,13.5 Q3.5,13.5 3.5,16.5 L3.5,20.5 Q3.5,24 6.5,24" fill="none" stroke="#333" stroke-width="1.6"/>
<path d="M22.5,24 Q25.5,24 25.5,20.5 L25.5,17.5 Q25.5,15.5 28,15" fill="none" stroke="#333" stroke-width="1.6"/>
<path d="M13,7 L20,10.5 L20,18.5 L13,22.5 L6,18.5 L6,10.5 Z M6,10.5 L13,14 L20,10.5 M13,14 L13,22.5" fill="#fff" stroke="#333" stroke-width="1.5" stroke-linejoin="round"/>
<path d="M20.5,0 L20.5,14" stroke="#333" stroke-width="1.3" stroke-dasharray="2 1.6"/>
<circle cx="20.5" cy="6" r="3.4" fill="#333"/></svg>
<svg style="left:561.9px;top:83.8px" width="15" height="8.5" viewBox="0 0 15 8.5"><polyline points="1,1 7.5,7.3 14,1" fill="none" stroke="#333" stroke-width="2.6" stroke-linecap="round" stroke-linejoin="round"/></svg>
<svg style="left:1263.9px;top:83.8px" width="15" height="8.5" viewBox="0 0 15 8.5"><polyline points="1,1 7.5,7.3 14,1" fill="none" stroke="#333" stroke-width="2.6" stroke-linecap="round" stroke-linejoin="round"/></svg>
<svg style="left:2073.8px;top:83.8px" width="15" height="8.5" viewBox="0 0 15 8.5"><polyline points="1,1 7.5,7.3 14,1" fill="none" stroke="#333" stroke-width="2.6" stroke-linecap="round" stroke-linejoin="round"/></svg>
<svg style="left:2149.3px;top:83.8px" width="15" height="8.5" viewBox="0 0 15 8.5"><polyline points="1,1 7.5,7.3 14,1" fill="none" stroke="#333" stroke-width="2.6" stroke-linecap="round" stroke-linejoin="round"/></svg>
<span class="t tb" style="left:1065.2px;top:73.4px;font-size:23.5px;line-height:23.5px;color:#333;font-weight:bold;">(</span>
<span class="t tb" style="left:1071.3px;top:69.5px;font-size:28px;line-height:28px;color:#333;font-weight:bold;font-style:italic;transform:scaleX(1.3286);font-family:'Liberation Serif',serif;">x</span>
<span class="t tb" style="left:1088.6px;top:73.4px;font-size:23.5px;line-height:23.5px;color:#333;font-weight:bold;">)</span>
<svg style="left:75.0px;top:76.2px" width="20" height="20" viewBox="0 0 20 20"><path d="M0.5,8 L9,0.5 L9,5 C16,5 19.5,9 19.5,14.5 C19.5,16.8 18.8,18.3 18,19.4 C18.2,14.5 15,11.2 9,11.4 L9,15.8 Z" fill="#9b9b9b"/></svg>
<svg style="left:127.9px;top:76.2px" width="20" height="20" viewBox="0 0 20 20"><g transform="translate(20,0) scale(-1,1)"><path d="M0.5,8 L9,0.5 L9,5 C16,5 19.5,9 19.5,14.5 C19.5,16.8 18.8,18.3 18,19.4 C18.2,14.5 15,11.2 9,11.4 L9,15.8 Z" fill="#9b9b9b"/></g></svg>
<svg style="left:181.1px;top:74.2px" width="27" height="26.5" viewBox="0 0 27 26.5"><path d="M19,1 L25,6.5 L9.5,22 L2.5,24.5 L4.5,17 Z M4.5,17 L9.5,22 M17,3.5 L22.5,9" fill="none" stroke="#333" stroke-width="1.5" stroke-linejoin="round"/>
<path d="M2.5,24.5 L3.6,20.6 L6.4,23.2 Z" fill="#333"/><line x1="0" y1="25.5" x2="27" y2="25.5" stroke="#2a5db0" stroke-width="1.2"/></svg>
<svg style="left:7.5px;top:13.6px" width="29" height="33" viewBox="0 0 29 33">
<path d="M14.3,0.4 L28.6,8.2 L28.6,24.6 L14.3,32.4 L0.3,24.6 L0.3,8.2 Z" fill="#5cb947"/>
<path d="M14.3,8.2 L21.6,12.3 L21.6,20.6 L14.3,24.8 L7.2,20.6 L7.2,12.3 Z" fill="#f8f8f8"/>
<path d="M20.5,2.8 L16.8,8.8 L22.5,12 M0.3,18.2 L8.5,22.3 M21.8,19.5 L21.8,29" stroke="#f8f8f8" stroke-width="1.6" fill="none"/>
<path d="M14.6,10.8 L18.6,13 L18.6,19.6 L14.6,22 L10.6,19.8 L10.6,13.2 L13.5,11.4" fill="none" stroke="#555" stroke-width="1.9"/>
<path d="M14.4,9.5 L14.6,12.5 M18.9,16.5 L17,16.5 M14,23 L14,20.5 M9.5,16.5 L11.5,16.7" stroke="#f8f8f8" stroke-width="1.8"/>
</svg>
<div class="a" style="left:170.3px;top:21.2px;width:23.6px;height:4px;background:#2e2e2e;"></div>
<div class="a" style="left:170.3px;top:30.4px;width:23.6px;height:4px;background:#2e2e2e;"></div>
<div class="a" style="left:170.3px;top:39.5px;width:23.6px;height:4px;background:#2e2e2e;"></div>
<svg style="left:821.2px;top:22.5px" width="22" height="21" viewBox="0 0 22 21"><g fill="none" stroke="#333" stroke-width="2.7" stroke-linecap="round">
<path d="M9,12.5 L5.6,15.8 A3.6,3.6 0 0 1 0.6,10.8 L6,5.4 A3.6,3.6 0 0 1 11.4,5.8" transform="translate(1.8,3.2)"/>
<path d="M9,6.5 L12.4,3.2 A3.6,3.6 0 0 1 17.4,8.2 L12,13.6 A3.6,3.6 0 0 1 6.6,13.2" transform="translate(1.8,-1.8)"/></g></svg>
<svg style="left:857.5px;top:22.0px" width="27" height="20" viewBox="0 0 27 20"><path d="M1,2.2 Q1,1 2.2,1 L9.5,1 L11.8,3.8 L24.8,3.8 Q26,3.8 26,5 L26,17.8 Q26,19 24.8,19 L2.2,19 Q1,19 1,17.8 Z" fill="#fff" fill-opacity="0.6" stroke="#bdbdbd" stroke-width="1.5" stroke-linejoin="round"/></svg>
<svg style="left:1050.4px;top:18.8px" width="24" height="21" viewBox="0 0 24 21"><path d="M12,0.3 L24,5.8 L12,11.6 L0.3,5.8 Z" fill="#1553b6"/>
<path d="M5.2,10 L12,13.3 L18.8,10 L18.8,15.5 Q12,21.8 5.2,15.5 Z" fill="#1553b6"/>
<path d="M2.2,7 L2.2,15 M1,20.5 L2.2,14.5 L3.6,20.5 Z" stroke="#1553b6" stroke-width="1.3" fill="#1553b6"/></svg>
<svg style="left:1087.4px;top:16.5px" width="27" height="27" viewBox="0 0 27 27"><circle cx="13.5" cy="13.5" r="12.3" fill="#fff" stroke="#2e2e2e" stroke-width="2.1"/>
<path d="M6,5.5 Q9,3 12.5,3.2 L13.5,6.5 L10.5,8.5 L11.5,11.5 L8,12 L5,10 Z" fill="#2e2e2e"/>
<path d="M12,13.5 L17,13 L20.5,16 L18.5,20.5 L16.5,24.5 L14.5,21.5 L14.8,17.5 Z" fill="#2e2e2e"/>
<path d="M18.5,4.5 L21.5,6.5 L20.5,9.5 L17.5,8 Z" fill="#2e2e2e"/></svg>
<svg style="left:1130.6px;top:17.8px" width="26" height="22" viewBox="0 0 26 22"><path d="M5.5,1.2 L14.5,1.2 L14.5,4.5 M5.5,1.2 L5.5,4.2 M8.8,18.6 L1.2,18.6 L1.2,4.2 L8.5,4.2" fill="none" stroke="#2e2e2e" stroke-width="2.2"/>
<path d="M10.2,6.2 L19,6.2 L24.6,11.6 L24.6,21 L10.2,21 Z" fill="#f8f8f8" stroke="#2e2e2e" stroke-width="2.2" stroke-linejoin="miter"/>
<path d="M18.6,6.5 L18.6,12 L24.4,12" fill="none" stroke="#2e2e2e" stroke-width="2"/></svg>
<svg style="left:1228.8px;top:15.5px" width="12" height="27" viewBox="0 0 12 27"><rect x="4.45" y="0.2" width="3.1" height="2.8" fill="#2e2e2e"/><rect x="4.45" y="5" width="3.1" height="2.5" fill="#2e2e2e"/><circle cx="6" cy="13.6" r="4.2" fill="#2e2e2e"/><rect x="4.45" y="19.9" width="3.1" height="2.5" fill="#2e2e2e"/><rect x="4.45" y="24" width="3.1" height="2.8" fill="#2e2e2e"/></svg>
<svg style="left:1292.1px;top:15.5px" width="27" height="27" viewBox="0 0 27 27"><path d="M1.5,13 L7.5,13 L7.5,25 L1.5,25 Z" fill="none" stroke="#2e2e2e" stroke-width="2.1" stroke-linejoin="round"/>
<path d="M7.5,13.5 C11.5,11 13.5,6.5 14,2.2 C17.5,1 19.5,4.5 17.5,10.5 L24,10.5 C27,10.8 27,14.2 24.8,14.6 C26.8,15.5 26.2,18.4 24.2,18.6 C25.8,19.8 25,22.2 23.2,22.4 C24.2,23.8 23.4,25.6 21.4,25.6 L13.5,25.6 C11,25.6 9.5,24.5 7.5,24.2" fill="none" stroke="#2e2e2e" stroke-width="2.1" stroke-linejoin="round" stroke-linecap="round"/></svg>
<svg style="left:2027.2px;top:19.8px" width="30" height="26" viewBox="0 0 30 26"><path d="M9,1.5 Q5.2,1.5 5.2,5 L5.2,9.5 Q5.2,13 1.5,13 Q5.2,13 5.2,16.5 L5.2,21 Q5.2,24.5 9,24.5" fill="none" stroke="#666" stroke-width="2.9"/>
<path d="M21,1.5 Q24.8,1.5 24.8,5 L24.8,9.5 Q24.8,13 28.5,13 Q24.8,13 24.8,16.5 L24.8,21 Q24.8,24.5 21,24.5" fill="none" stroke="#666" stroke-width="2.9"/>
<path d="M9.5,13 L13.5,17.5 L21,8.5" fill="none" stroke="#666" stroke-width="3.6"/></svg>
<svg style="left:2076.9px;top:19.3px" width="26" height="27" viewBox="0 0 26 27"><path d="M13,0.5 C19,0.5 20.5,6 20.5,11 C20.5,17 23,19 25.5,21 L25.5,22.5 L0.5,22.5 L0.5,21 C3,19 5.5,17 5.5,11 C5.5,6 7,0.5 13,0.5 Z" fill="#666"/>
<path d="M9.5,23.5 A3.5,3 0 0 0 16.5,23.5 Z" fill="#666"/></svg>
<div class="a" style="left:2090px;top:9px;width:24px;height:24px;background:#1553b6;border-radius:4px;"></div>
<span class="t tb" style="left:2097.6px;top:13.6px;font-size:18px;line-height:18px;color:#fff;font-weight:bold;transform:scaleX(0.8590);">1</span>
<svg style="left:2125.6px;top:19.5px" width="24.5" height="26.5" viewBox="0 0 24.5 26.5"><rect x="1.3" y="1.3" width="21.8" height="23.8" rx="2.2" fill="none" stroke="#666" stroke-width="2.6"/>
<path d="M12,7 L19.6,7 M12,13 L19.6,13 M12,19.5 L19.6,19.5" stroke="#666" stroke-width="3.1"/>
<path d="M4.3,6.8 L6.3,8.8 L9.5,4.5 M4.3,12.8 L6.3,14.8 L9.5,10.5 M4.3,19.3 L6.3,21.3 L9.5,17" fill="none" stroke="#666" stroke-width="1.7"/></svg>
<svg style="left:2172.0px;top:19.5px" width="28" height="26.5" viewBox="0 0 28 26.5"><rect x="1.3" y="1.5" width="9.6" height="9.6" fill="none" stroke="#666" stroke-width="2.8"/>
<rect x="1.3" y="15.6" width="9.6" height="9.6" fill="none" stroke="#666" stroke-width="2.8"/>
<rect x="16.4" y="15.6" width="9.6" height="9.6" fill="none" stroke="#666" stroke-width="2.8"/>
<path d="M21.2,0.2 L21.2,12.4 M15,6.3 L27.4,6.3" stroke="#666" stroke-width="3.1"/></svg>
<svg style="left:2221.8px;top:20.3px" width="25.5" height="26" viewBox="0 0 25.5 26"><path d="M11.5,0.5 C19,0.5 23,5.5 23,10.5 C23,12 23.8,13 25,15.5 L22.8,16.5 L22.8,20 Q22.8,22 20.5,22 L18,22 L18,25.5 L6,25.5 L6,19.5 C2,17 0.5,14 0.5,10.5 C0.5,5 5,0.5 11.5,0.5 Z" fill="#666"/>
<circle cx="9.5" cy="11.5" r="3.6" fill="none" stroke="#f8f8f8" stroke-width="2.2" stroke-dasharray="1.9 0.95"/><circle cx="9.5" cy="11.5" r="2.2" fill="none" stroke="#f8f8f8" stroke-width="1.2"/>
<circle cx="16.2" cy="6.8" r="2.5" fill="none" stroke="#f8f8f8" stroke-width="1.8" stroke-dasharray="1.3 0.65"/><circle cx="16.2" cy="6.8" r="1.4" fill="none" stroke="#f8f8f8" stroke-width="1"/></svg>
<div class="a" style="left:2368.5px;top:18.6px;width:27px;height:27px;border-radius:50%;background:#666;"></div>
<span class="t tb" style="left:2376.3px;top:21.0px;font-size:22.5px;line-height:22.5px;color:#f8f8f8;font-weight:bold;transform:scaleX(0.8440);">?</span>
<svg style="left:2407.2px;top:29.5px" width="12" height="6.6" viewBox="0 0 12 6.6"><path d="M0,0 L12,0 L6.0,6.6 Z" fill="#333"/></svg>
<svg style="left:2538.8px;top:27.5px" width="12" height="6.6" viewBox="0 0 12 6.6"><path d="M0,0 L12,0 L6.0,6.6 Z" fill="#333"/></svg>
<svg style="left:2437px;top:15px" width="36" height="36" viewBox="0 0 36 36"><defs><clipPath id="avc"><rect x="0" y="0" width="36" height="36" rx="3"/></clipPath></defs>
<g clip-path="url(#avc)"><rect width="36" height="36" fill="#b39a80"/>
<path d="M0,0 L36,0 L36,8 L20,10 L0,14 Z" fill="#c9b9a6"/><path d="M22,0 L36,0 L36,14 L27,10 Z" fill="#a9a9ab"/>
<path d="M0,26 L14,31 L36,27 L36,36 L0,36 Z" fill="#c8bfb6"/><path d="M26,24 L36,20 L36,36 L28,36 Z" fill="#9d9fa3"/>
<path d="M3,14 L12,10 L34,16 L34,24 L13,31 L3,24 Z" fill="#8a6f50"/>
<path d="M3,14 L12,10 L34,16 L26,20 Z" fill="#9c8261"/>
<path d="M5,19 L25,24 L25,27 L5,22 Z" fill="#6e5538"/>
<ellipse cx="14.5" cy="17.5" rx="3.6" ry="1.9" fill="#2fa2ea"/><ellipse cx="25" cy="15.5" rx="3.2" ry="1.8" fill="#2fa2ea"/>
<circle cx="9" cy="24.5" r="1.3" fill="#3c2c1c"/><circle cx="14.5" cy="26" r="1.3" fill="#3c2c1c"/></g></svg>
<svg style="left:15.2px;top:73.8px" width="30" height="27" viewBox="0 0 30 27"><circle cx="5.6" cy="5.5" r="4.5" fill="none" stroke="#2e2e2e" stroke-width="2.6"/>
<path d="M5.6,10 L5.6,23" stroke="#2e2e2e" stroke-width="2.9"/><circle cx="5.6" cy="23.9" r="3.1" fill="#2e2e2e"/>
<path d="M5.6,18.3 L11.5,18.3 Q15.6,18.3 16.2,13.5" fill="none" stroke="#2e2e2e" stroke-width="2.7"/><circle cx="16.2" cy="12.6" r="3.1" fill="#2e2e2e"/>
<path d="M15,2.7 L29.8,2.7 M21.3,10.3 L29.8,10.3 M21.3,17.7 L29.8,17.7 M15,25.3 L29.8,25.3" stroke="#2e2e2e" stroke-width="2.8"/></svg>
<svg style="left:18.8px;top:126.0px" width="26" height="28" viewBox="0 0 26 28"><rect x="3.35" y="0.5" width="3.3" height="2.8" fill="#2e2e2e"/><rect x="3.35" y="5.4" width="3.3" height="2.3" fill="#2e2e2e"/><rect x="3.35" y="20.3" width="3.3" height="2.3" fill="#2e2e2e"/><rect x="3.35" y="24.6" width="3.3" height="2.7" fill="#2e2e2e"/><circle cx="5" cy="13.9" r="4.3" fill="#2e2e2e"/><path d="M18.7,15.3 L18.7,27.8 M12.5,21.5 L25,21.5" stroke="#1a4fb0" stroke-width="2.7"/></svg>
<svg style="left:15.1px;top:178.6px" width="30" height="26" viewBox="0 0 30 26"><ellipse cx="15" cy="10.8" rx="14.5" ry="10.6" fill="#2e2e2e"/><path d="M7,17 Q6,22 1,25.5 Q10,24 14,19 Z" fill="#2e2e2e"/></svg>
<svg style="left:16.9px;top:231.3px" width="27" height="27" viewBox="0 0 27 27"><path d="M17.5,1.3 L4,1.3 Q1.3,1.3 1.3,4 L1.3,23 Q1.3,25.7 4,25.7 L17,25.7 Q19.7,25.7 19.7,23 L19.7,18" fill="none" stroke="#2e2e2e" stroke-width="2.5" stroke-linecap="round"/>
<path d="M5.5,7.5 L15,7.5 M5.5,12.5 L13,12.5 M5.5,17.5 L10,17.5" stroke="#2e2e2e" stroke-width="2.2"/>
<path d="M22,5.5 L26,9.5 L15.5,20 L10.5,21.3 L11.8,16.2 Z" fill="#2e2e2e"/></svg>
<svg style="left:14.6px;top:284.0px" width="30" height="28" viewBox="0 0 30 28"><path d="M9.37,10.05 A9.5,9.5 0 1 1 8.99,18.81" fill="none" stroke="#2e2e2e" stroke-width="3"/>
<path d="M12.6,1.3 L21.6,1.3 M17.6,1.3 L17.6,5.2" stroke="#2e2e2e" stroke-width="2.3"/><path d="M24.8,6.8 L27,4.6" stroke="#2e2e2e" stroke-width="2.8"/>
<path d="M17.2,15.4 L21.6,10.9" stroke="#2e2e2e" stroke-width="2.3" stroke-linecap="round"/>
<path d="M3.2,10.9 L10,10.9 M1.5,13.8 L9.6,13.8 M3.2,16.9 L9.6,16.9" stroke="#2e2e2e" stroke-width="1.7"/></svg>
<svg style="left:13.8px;top:332.3px" width="33" height="36" viewBox="0 0 33 36"><circle cx="16.2" cy="17.6" r="14.7" fill="#2e2e2e"/><path d="M24,28.5 L32,33.8 L28.5,25.5 Z" fill="#2e2e2e"/>
<polygon points="16.20,7.60 24.86,12.60 24.86,22.60 16.20,27.60 7.54,22.60 7.54,12.60" fill="#fafafa"/><polygon points="16.20,11.00 21.92,14.30 21.92,20.90 16.20,24.20 10.48,20.90 10.48,14.30" fill="#2e2e2e"/>
<polygon points="16.20,12.60 20.53,15.10 20.53,20.10 16.20,22.60 11.87,20.10 11.87,15.10" fill="#fafafa"/><polygon points="16.20,14.70 18.71,16.15 18.71,19.05 16.20,20.50 13.69,19.05 13.69,16.15" fill="#2e2e2e"/>
<path d="M19.5,8.5 L16,14 M7.5,21.5 L13,21.5 M21,17 L24.5,23.5" stroke="#2e2e2e" stroke-width="1.5"/></svg>
<svg style="left:17.9px;top:389.2px" width="24.2" height="27.2" viewBox="0 0 24.2 27.2"><rect x="1.4" y="1.4" width="21.4" height="24.4" rx="2.6" fill="#fafafa" stroke="#2e2e2e" stroke-width="2.6"/>
<path d="M12.3,7.6 L19.6,7.6 M12.3,13.6 L19.6,13.6 M12.3,19.8 L19.6,19.8" stroke="#2e2e2e" stroke-width="2.8"/>
<path d="M4.4,7.2 L6.4,9.4 L9.8,5 M4.4,13.2 L6.4,15.4 L9.8,11 M4.4,19.4 L6.4,21.6 L9.8,17.2" fill="none" stroke="#2e2e2e" stroke-width="1.7"/></svg>
<svg style="left:15.8px;top:1408.8px" width="29" height="23" viewBox="0 0 29 23"><rect x="0.5" y="0.5" width="27.6" height="12.6" rx="1.6" fill="#2e2e2e"/>
<circle cx="16.6" cy="12" r="9.7" fill="#fafafa"/>
<circle cx="16.6" cy="12" r="5.8" fill="#fafafa" stroke="#2e2e2e" stroke-width="3"/><path d="M21,16.5 L26.3,21.8" stroke="#2e2e2e" stroke-width="3.5" stroke-linecap="butt"/></svg>
<svg style="left:103px;top:268.5px" width="12" height="12" viewBox="0 0 12 12"><circle cx="6" cy="6" r="4.6" fill="#fff" stroke="#333" stroke-width="1.3"/><circle cx="6" cy="6" r="2" fill="#333"/></svg>
<svg style="left:98.2px;top:301.9px" width="22" height="22.5" viewBox="0 0 22 22.5"><path d="M1,1 L21,4 L21,21.5 L1,18.5 Z" fill="#e6e6e6" stroke="#b4b4b4" stroke-width="1.5" stroke-linejoin="round"/><path d="M11.5,2.6 L11.5,11 L21,12.5" fill="none" stroke="#b4b4b4" stroke-width="1.5"/></svg>
<svg style="left:98.2px;top:340.9px" width="22" height="22.5" viewBox="0 0 22 22.5"><path d="M1,1 L21,4 L21,21.5 L1,18.5 Z" fill="#e6e6e6" stroke="#b4b4b4" stroke-width="1.5" stroke-linejoin="round"/><path d="M11.5,2.6 L11.5,11 L21,12.5" fill="none" stroke="#b4b4b4" stroke-width="1.5"/></svg>
<svg style="left:98.2px;top:379.9px" width="22" height="22.5" viewBox="0 0 22 22.5"><path d="M1,1 L21,4 L21,21.5 L1,18.5 Z" fill="#e6e6e6" stroke="#b4b4b4" stroke-width="1.5" stroke-linejoin="round"/><path d="M11.5,2.6 L11.5,11 L21,12.5" fill="none" stroke="#b4b4b4" stroke-width="1.5"/></svg>
<svg style="left:99.9px;top:419.2px" width="21" height="22" viewBox="0 0 21 22"><path d="M10.5,1 L20,5.8 L20,15.5 L10.5,20.8 L1,15.5 L1,5.8 Z" fill="#fff" stroke="#333" stroke-width="1.5" stroke-linejoin="round"/><path d="M10.5,10.8 L20,5.8 L20,15.5 L10.5,20.8 Z" fill="#e2e2e2" stroke="#333" stroke-width="1.3" stroke-linejoin="round"/><path d="M1,5.8 L10.5,10.8" fill="none" stroke="#333" stroke-width="1.3"/></svg>
<svg style="left:99.0px;top:457.7px" width="23" height="23" viewBox="0 0 23 23"><path d="M11.5,5 L13.5,1.2 L18.5,1.2 L22,5.5 L22,22 L6.5,22 L1.5,17.5 L1.5,11.5 L9.5,11.5 Z" fill="#fff" fill-opacity="0.75" stroke="#333" stroke-width="1.4" stroke-linejoin="round"/><path d="M13.5,1.2 L17,5.8 L22,5.8 M17,5.8 L17,16 L6.5,16 L1.5,11.5 M6.5,16 L6.5,22 M17,16 L22,22" fill="none" stroke="#333" stroke-width="1" stroke-linejoin="round"/><path d="M1,1.8 L6,1.8 Q10,1.8 10,6.5" fill="none" stroke="#333" stroke-width="2"/><path d="M5.5,6.8 L14.5,6.8 L10,12 Z" fill="#333"/></svg>
<svg style="left:98.7px;top:538.0px" width="24" height="18.5" viewBox="0 0 24 18.5"><path d="M1,2.2 Q1,1 2.2,1 L9.5,1 L11.8,3.8 L21.8,3.8 Q23,3.8 23,5 L23,16.3 Q23,17.5 21.8,17.5 L2.2,17.5 Q1,17.5 1,16.3 Z" fill="#fff" fill-opacity="0.6" stroke="#aaa" stroke-width="1.3" stroke-linejoin="round"/></svg>
<svg style="left:97.8px;top:575.2px" width="22" height="22" viewBox="0 0 22 22"><path d="M1,1.2 L16,1.2 L21,5 L21,21 L5,21 L1,17.5 Z" fill="#f4f4f4" stroke="#b0b0b0" stroke-width="1.2" stroke-linejoin="round"/><rect x="5" y="5" width="8" height="8" fill="#d2d2d2"/><rect x="13" y="5" width="8" height="8" fill="#c4c4c4"/><rect x="5" y="13" width="8" height="8" fill="#cacaca"/><rect x="13" y="13" width="8" height="8" fill="#bababa"/><path d="M1,1.2 L5,5 L21,5 M5,5 L5,21 M13,5 L13,21 M5,13 L21,13" fill="none" stroke="#b8b8b8" stroke-width="0.9"/></svg>
<svg style="left:97.0px;top:612.5px" width="24.5" height="25.5" viewBox="0 0 24.5 25.5"><path d="M1,1 L6,1.5 L23.5,7 L23.5,24.5 L12.5,24.5 L1,18.5 Z" fill="#f2f2f2" stroke="#8c8c8c" stroke-width="1.5" stroke-linejoin="round"/><path d="M1,1 L12.5,6.5 L23.5,7 M12.5,6.5 L12.5,24.5" fill="none" stroke="#8c8c8c" stroke-width="1.3"/><path d="M14.5,9 L21.5,9.3 L21.5,22.5 L14.5,22.5 Z" fill="#d4d4d4" stroke="#8c8c8c" stroke-width="1"/><path d="M15,21.5 L20.5,10.5 L21,22 Z" fill="#bdbdbd"/><g fill="#e0e0e0" stroke="#8c8c8c" stroke-width="1.1"><ellipse cx="4.3" cy="7.2" rx="1.4" ry="1.9"/><ellipse cx="9" cy="9.5" rx="1.4" ry="1.9"/><ellipse cx="4.3" cy="14.2" rx="1.4" ry="1.9"/><ellipse cx="9" cy="16.7" rx="1.4" ry="1.9"/></g></svg>
<svg style="left:97.0px;top:651.5px" width="24.5" height="25.5" viewBox="0 0 24.5 25.5"><path d="M1,1 L6,1.5 L23.5,7 L23.5,24.5 L12.5,24.5 L1,18.5 Z" fill="#f2f2f2" stroke="#8c8c8c" stroke-width="1.5" stroke-linejoin="round"/><path d="M1,1 L12.5,6.5 L23.5,7 M12.5,6.5 L12.5,24.5" fill="none" stroke="#8c8c8c" stroke-width="1.3"/><path d="M14.5,9 L21.5,9.3 L21.5,22.5 L14.5,22.5 Z" fill="#d4d4d4" stroke="#8c8c8c" stroke-width="1"/><path d="M15,21.5 L20.5,10.5 L21,22 Z" fill="#bdbdbd"/><g fill="#e0e0e0" stroke="#8c8c8c" stroke-width="1.1"><ellipse cx="4.3" cy="7.2" rx="1.4" ry="1.9"/><ellipse cx="9" cy="9.5" rx="1.4" ry="1.9"/><ellipse cx="4.3" cy="14.2" rx="1.4" ry="1.9"/><ellipse cx="9" cy="16.7" rx="1.4" ry="1.9"/></g></svg>
<svg style="left:98.7px;top:694.0px" width="24" height="18.5" viewBox="0 0 24 18.5"><path d="M1,2.2 Q1,1 2.2,1 L9.5,1 L11.8,3.8 L21.8,3.8 Q23,3.8 23,5 L23,16.3 Q23,17.5 21.8,17.5 L2.2,17.5 Q1,17.5 1,16.3 Z" fill="#fff" fill-opacity="0.6" stroke="#aaa" stroke-width="1.3" stroke-linejoin="round"/></svg>
<svg style="left:97.0px;top:731.2px" width="23.5" height="22.5" viewBox="0 0 27 26.5"><path d="M19,1 L25,6.5 L9.5,22 L2.5,24.5 L4.5,17 Z M4.5,17 L9.5,22 M17,3.5 L22.5,9" fill="none" stroke="#9a9a9a" stroke-width="1.5" stroke-linejoin="round"/>
<path d="M2.5,24.5 L3.6,20.6 L6.4,23.2 Z" fill="#9a9a9a"/><line x1="0" y1="25.5" x2="27" y2="25.5" stroke="#8fa6d6" stroke-width="1.2"/></svg>
<svg style="left:97.3px;top:769.7px" width="23" height="23" viewBox="0 0 23 23"><path d="M1,1.2 L17.5,1.2 L22,4.5 L22,22 L5,22 L1,18.5 Z" fill="#fff" stroke="#9a9a9a" stroke-width="1.4" stroke-linejoin="round"/><path d="M1,1.2 L5,4.8 L22,4.8 M5,4.8 L5,22" fill="none" stroke="#c4c4c4" stroke-width="0.9"/><path d="M8,11 L11,8.5 L21.5,8.5 L21.5,21.5 L8,21.5 Z" fill="#c6c6c6" stroke="#aaa" stroke-width="0.9"/><path d="M8,11 L11.5,12 L21.5,12 M11.5,12 L11.5,21.5" fill="none" stroke="#b0b0b0" stroke-width="0.8"/></svg>
<svg style="left:97.5px;top:808.5px" width="22.5" height="23.5" viewBox="0 0 22.5 23.5"><path d="M3,5 Q10.5,-0.5 11,1 Q12,-0.5 19.5,5 Q21.5,6.2 21.5,8.5 L21.5,15.5 Q21.5,17.5 19.5,18.5 L12,22.6 Q11,23 10,22.6 L2.5,18.5 Q0.8,17.5 0.8,15.5 L0.8,8.5 Q0.8,6.2 3,5 Z" fill="#dcdcdc" stroke="#c2c2c2" stroke-width="1"/><path d="M0.8,8.5 Q2,10 4,11 L9.5,14 Q11,14.8 12.5,14 L18.5,11 Q20.5,10 21.5,8.5 L21.5,15.5 Q21.5,17.5 19.5,18.5 L12,22.6 Q11,23 10,22.6 L2.5,18.5 Q0.8,17.5 0.8,15.5 Z" fill="#cdcdcd"/><path d="M7.5,13 L7.5,21 M14.5,13 L14.5,21" stroke="#e2e2e2" stroke-width="2.4"/><ellipse cx="11" cy="7" rx="4.6" ry="3" fill="#b8b8b8" stroke="#aaa" stroke-width="0.8"/><ellipse cx="11" cy="7.8" rx="3" ry="1.8" fill="#cfcfcf"/></svg>
<svg style="left:97.0px;top:848.2px" width="23.5" height="22.5" viewBox="0 0 27 26.5"><path d="M19,1 L25,6.5 L9.5,22 L2.5,24.5 L4.5,17 Z M4.5,17 L9.5,22 M17,3.5 L22.5,9" fill="none" stroke="#9a9a9a" stroke-width="1.5" stroke-linejoin="round"/>
<path d="M2.5,24.5 L3.6,20.6 L6.4,23.2 Z" fill="#9a9a9a"/><line x1="0" y1="25.5" x2="27" y2="25.5" stroke="#8fa6d6" stroke-width="1.2"/></svg>
<svg style="left:97.3px;top:886.7px" width="23" height="23" viewBox="0 0 23 23"><path d="M1,1.2 L17.5,1.2 L22,4.5 L22,22 L5,22 L1,18.5 Z" fill="#fff" stroke="#9a9a9a" stroke-width="1.4" stroke-linejoin="round"/><path d="M1,1.2 L5,4.8 L22,4.8 M5,4.8 L5,22" fill="none" stroke="#c4c4c4" stroke-width="0.9"/><path d="M8,11 L11,8.5 L21.5,8.5 L21.5,21.5 L8,21.5 Z" fill="#c6c6c6" stroke="#aaa" stroke-width="0.9"/><path d="M8,11 L11.5,12 L21.5,12 M11.5,12 L11.5,21.5" fill="none" stroke="#b0b0b0" stroke-width="0.8"/></svg>
<svg style="left:98.7px;top:928.0px" width="24" height="18.5" viewBox="0 0 24 18.5"><path d="M1,2.2 Q1,1 2.2,1 L9.5,1 L11.8,3.8 L21.8,3.8 Q23,3.8 23,5 L23,16.3 Q23,17.5 21.8,17.5 L2.2,17.5 Q1,17.5 1,16.3 Z" fill="#fff" fill-opacity="0.6" stroke="#aaa" stroke-width="1.3" stroke-linejoin="round"/></svg>
<svg style="left:97.0px;top:965.2px" width="23.5" height="22.5" viewBox="0 0 27 26.5"><path d="M19,1 L25,6.5 L9.5,22 L2.5,24.5 L4.5,17 Z M4.5,17 L9.5,22 M17,3.5 L22.5,9" fill="none" stroke="#9a9a9a" stroke-width="1.5" stroke-linejoin="round"/>
<path d="M2.5,24.5 L3.6,20.6 L6.4,23.2 Z" fill="#9a9a9a"/><line x1="0" y1="25.5" x2="27" y2="25.5" stroke="#8fa6d6" stroke-width="1.2"/></svg>
<svg style="left:97.3px;top:1003.7px" width="23" height="23" viewBox="0 0 23 23"><path d="M1,1.2 L17.5,1.2 L22,4.5 L22,22 L5,22 L1,18.5 Z" fill="#fff" stroke="#9a9a9a" stroke-width="1.4" stroke-linejoin="round"/><path d="M1,1.2 L5,4.8 L22,4.8 M5,4.8 L5,22" fill="none" stroke="#c4c4c4" stroke-width="0.9"/><path d="M8,11 L11,8.5 L21.5,8.5 L21.5,21.5 L8,21.5 Z" fill="#c6c6c6" stroke="#aaa" stroke-width="0.9"/><path d="M8,11 L11.5,12 L21.5,12 M11.5,12 L11.5,21.5" fill="none" stroke="#b0b0b0" stroke-width="0.8"/></svg>
<svg style="left:96.8px;top:1093.5px" width="23.5" height="21.5" viewBox="0 0 23.5 21.5"><path d="M11.5,1.2 L18.5,1.2 L22.5,4.8 L22.5,20.5 L7,20.5 L1.2,16.5 L1.2,10.5 L11.5,8.5 Z" fill="#fff" stroke="#333" stroke-width="1.4" stroke-linejoin="round"/><path d="M11.5,1.2 L15.5,4.8 L22.5,4.8 M15.5,4.8 L15.5,13.5 L7,14.8 L1.2,10.5 M7,14.8 L7,20.5 M15.5,13.5 L22.5,20" fill="none" stroke="#333" stroke-width="1.1" stroke-linejoin="round"/></svg>
<svg style="left:66.7px;top:230.2px" width="17" height="10.2" viewBox="0 0 17 10.2"><polyline points="1,1 8.5,9.0 16,1" fill="none" stroke="#555" stroke-width="3.6" stroke-linecap="round" stroke-linejoin="round"/></svg>
<svg style="left:66.7px;top:542.2px" width="17" height="10.2" viewBox="0 0 17 10.2"><polyline points="1,1 8.5,9.0 16,1" fill="none" stroke="#555" stroke-width="3.6" stroke-linecap="round" stroke-linejoin="round"/></svg>
<svg style="left:66.7px;top:698.2px" width="17" height="10.2" viewBox="0 0 17 10.2"><polyline points="1,1 8.5,9.0 16,1" fill="none" stroke="#555" stroke-width="3.6" stroke-linecap="round" stroke-linejoin="round"/></svg>
<svg style="left:66.7px;top:932.2px" width="17" height="10.2" viewBox="0 0 17 10.2"><polyline points="1,1 8.5,9.0 16,1" fill="none" stroke="#555" stroke-width="3.6" stroke-linecap="round" stroke-linejoin="round"/></svg>
<svg style="left:66.7px;top:1060.2px" width="17" height="10.2" viewBox="0 0 17 10.2"><polyline points="1,1 8.5,9.0 16,1" fill="none" stroke="#555" stroke-width="3.6" stroke-linecap="round" stroke-linejoin="round"/></svg>
<svg style="left:70.0px;top:421.5px" width="10.5" height="17" viewBox="0 0 10.5 17"><polyline points="1.3,1.3 9.2,8.5 1.3,15.7" fill="none" stroke="#555" stroke-width="3.5" stroke-linecap="round" stroke-linejoin="round"/></svg>
<svg style="left:70.0px;top:460.5px" width="10.5" height="17" viewBox="0 0 10.5 17"><polyline points="1.3,1.3 9.2,8.5 1.3,15.7" fill="none" stroke="#555" stroke-width="3.5" stroke-linecap="round" stroke-linejoin="round"/></svg>
<svg style="left:293.9px;top:415.7px" width="12" height="27" viewBox="0 0 12 27"><rect x="4.45" y="0.2" width="3.1" height="2.8" fill="#2a2a2a"/><rect x="4.45" y="5" width="3.1" height="2.5" fill="#2a2a2a"/><circle cx="6" cy="13.6" r="4.3" fill="#2a2a2a"/><rect x="4.45" y="19.9" width="3.1" height="2.5" fill="#2a2a2a"/><rect x="4.45" y="24" width="3.1" height="2.8" fill="#2a2a2a"/></svg>
<svg style="left:293.9px;top:571.7px" width="12" height="27" viewBox="0 0 12 27"><rect x="4.45" y="0.2" width="3.1" height="2.8" fill="#2a2a2a"/><rect x="4.45" y="5" width="3.1" height="2.5" fill="#2a2a2a"/><circle cx="6" cy="13.6" r="4.3" fill="#2a2a2a"/><rect x="4.45" y="19.9" width="3.1" height="2.5" fill="#2a2a2a"/><rect x="4.45" y="24" width="3.1" height="2.8" fill="#2a2a2a"/></svg>
<svg style="left:293.9px;top:610.7px" width="12" height="27" viewBox="0 0 12 27"><rect x="4.45" y="0.2" width="3.1" height="2.8" fill="#2a2a2a"/><rect x="4.45" y="5" width="3.1" height="2.5" fill="#2a2a2a"/><circle cx="6" cy="13.6" r="4.3" fill="#2a2a2a"/><rect x="4.45" y="19.9" width="3.1" height="2.5" fill="#2a2a2a"/><rect x="4.45" y="24" width="3.1" height="2.8" fill="#2a2a2a"/></svg>
<svg style="left:293.9px;top:649.7px" width="12" height="27" viewBox="0 0 12 27"><rect x="4.45" y="0.2" width="3.1" height="2.8" fill="#2a2a2a"/><rect x="4.45" y="5" width="3.1" height="2.5" fill="#2a2a2a"/><circle cx="6" cy="13.6" r="4.3" fill="#2a2a2a"/><rect x="4.45" y="19.9" width="3.1" height="2.5" fill="#2a2a2a"/><rect x="4.45" y="24" width="3.1" height="2.8" fill="#2a2a2a"/></svg>
<svg style="left:293.9px;top:805.7px" width="12" height="27" viewBox="0 0 12 27"><rect x="4.45" y="0.2" width="3.1" height="2.8" fill="#2a2a2a"/><rect x="4.45" y="5" width="3.1" height="2.5" fill="#2a2a2a"/><circle cx="6" cy="13.6" r="4.3" fill="#2a2a2a"/><rect x="4.45" y="19.9" width="3.1" height="2.5" fill="#2a2a2a"/><rect x="4.45" y="24" width="3.1" height="2.8" fill="#2a2a2a"/></svg>
<svg style="left:219.5px;top:183.2px" width="27" height="21.5" viewBox="0 0 27 21.5"><path d="M1.5,6 L1.5,2.5 Q1.5,1 3,1 L9,1 L11.5,4 L24,4 Q25.5,4 25.5,5.5 L25.5,19 Q25.5,20.5 24,20.5 L11,20.5" fill="none" stroke="#b4b4b4" stroke-width="1.5" stroke-linejoin="round"/>
<path d="M1.5,17 L1.5,20.5 L4,20.5" fill="none" stroke="#b4b4b4" stroke-width="1.4"/>
<path d="M7.5,8 L7.5,18 M2.5,13 L12.5,13" stroke="#9db5e0" stroke-width="2.2"/></svg>
<div class="a" style="left:269px;top:183.7px;width:6px;height:20.7px;background:#9b9b9b;"></div>
<div class="a" style="left:281.2px;top:183.7px;width:6px;height:20.7px;background:#9b9b9b;"></div>
<svg style="left:310.8px;top:180.3px" width="24" height="26.5" viewBox="0 0 24 26.5"><circle cx="12" cy="15" r="9.8" fill="none" stroke="#2a2a2a" stroke-width="2.5"/>
<path d="M8,1.2 L16,1.2 M12,1.5 L12,5 M20,5.5 L22.5,8" stroke="#2a2a2a" stroke-width="2.3"/><path d="M12,15 L16.2,19.3" stroke="#2a2a2a" stroke-width="2" stroke-linecap="round"/></svg>
<svg style="left:76.5px;top:138.1px" width="22.5" height="22.5" viewBox="0 0 22.5 22.5"><path d="M1,1.2 L21.5,1.2 L13.3,11.3 L13.3,21.5 L9.3,18.3 L9.3,11.3 Z" fill="none" stroke="#2a2a2a" stroke-width="1.7" stroke-linejoin="round"/></svg>
<svg style="left:609px;top:119px" width="42" height="42" viewBox="0 0 42 42"><path d="M11,21.5 L17.8,28.3 L31.5,13.5" fill="none" stroke="#fff" stroke-width="4.6"/></svg>
<svg style="left:663.5px;top:132.3px" width="17" height="17.5" viewBox="0 0 17 17.5"><path d="M1.8,1.8 L15.2,15.7 M15.2,1.8 L1.8,15.7" fill="none" stroke="#c62d3f" stroke-width="3.8"/></svg>
<svg style="left:379.5px;top:228.5px" width="13" height="21" viewBox="0 0 13 21"><polyline points="11,1.8 2.5,10.5 11,19.2" fill="none" stroke="#666" stroke-width="3.4" stroke-linejoin="miter"/></svg>
<svg style="left:426.5px;top:249.8px" width="12" height="13" viewBox="0 0 12 13"><circle cx="2.6" cy="2.6" r="1.9" fill="none" stroke="#aaa" stroke-width="1.1"/><path d="M2.6,4.5 L2.6,10.5 M2.6,8.5 Q2.6,6 6,6 L9,5.8" fill="none" stroke="#aaa" stroke-width="1.2"/><circle cx="2.6" cy="11" r="1.5" fill="#aaa"/><circle cx="10" cy="5.5" r="1.5" fill="#aaa"/></svg>
<svg style="left:585.5px;top:225.5px" width="24" height="27" viewBox="0 0 26 28"><rect x="3.35" y="0.5" width="3.3" height="2.8" fill="#2e2e2e"/><rect x="3.35" y="5.4" width="3.3" height="2.3" fill="#2e2e2e"/><rect x="3.35" y="20.3" width="3.3" height="2.3" fill="#2e2e2e"/><rect x="3.35" y="24.6" width="3.3" height="2.7" fill="#2e2e2e"/><circle cx="5" cy="13.9" r="4.3" fill="#2e2e2e"/><path d="M18.7,15.3 L18.7,27.8 M12.5,21.5 L25,21.5" stroke="#1a4fb0" stroke-width="2.7"/></svg>
<svg style="left:646.7px;top:226.5px" width="24" height="24" viewBox="0 0 24 24"><circle cx="5" cy="4.6" r="3.6" fill="#fff" stroke="#2e2e2e" stroke-width="1.9"/><path d="M5,8.2 L5,19" stroke="#2e2e2e" stroke-width="2.3"/><circle cx="5" cy="20" r="3" fill="#2e2e2e"/>
<path d="M5,15.5 L14,15.5 Q19.5,15.5 20,9.5" fill="none" stroke="#2e2e2e" stroke-width="2.3"/><circle cx="20.3" cy="8.2" r="3" fill="#2e2e2e"/></svg>
<svg style="left:358.8px;top:362.1px" width="15.5" height="9" viewBox="0 0 15.5 9"><polyline points="1,1 7.75,7.8 14.5,1" fill="none" stroke="#222" stroke-width="2.8" stroke-linecap="round" stroke-linejoin="round"/></svg>
<svg style="left:0;top:0" width="2559" height="1439" viewBox="0 0 2559 1439">
<polygon points="384.8,369.0 421.7,337.2 486.0,354.6 448.8,388.0" fill="#e6edf1" stroke="#5c6c79" stroke-width="4.2" stroke-linejoin="round"/>
<polyline points="401.8,354.4 465.9,372.6" fill="none" stroke="#5c6c79" stroke-width="1.9"/>
<polyline points="451.3,345.2 414.2,377.7" fill="none" stroke="#5c6c79" stroke-width="1.9"/>
<polyline points="404.7,351.8 468.9,370.0" fill="none" stroke="#5c6c79" stroke-width="1.9"/>
<polyline points="456.4,346.6 419.4,379.3" fill="none" stroke="#5c6c79" stroke-width="1.9"/>
<circle cx="384.8" cy="369.0" r="3.3" fill="#5c6c79"/>
<circle cx="421.7" cy="337.2" r="3.3" fill="#5c6c79"/>
<circle cx="486.0" cy="354.6" r="3.3" fill="#5c6c79"/>
<circle cx="448.8" cy="388.0" r="3.3" fill="#5c6c79"/>
<circle cx="391.1" cy="363.6" r="3.3" fill="#5c6c79"/>
<circle cx="403.2" cy="353.1" r="3.3" fill="#5c6c79"/>
<circle cx="415.4" cy="342.6" r="3.3" fill="#5c6c79"/>
<circle cx="432.6" cy="340.2" r="3.3" fill="#5c6c79"/>
<circle cx="453.9" cy="345.9" r="3.3" fill="#5c6c79"/>
<circle cx="475.1" cy="351.6" r="3.3" fill="#5c6c79"/>
<circle cx="479.7" cy="360.3" r="3.3" fill="#5c6c79"/>
<circle cx="467.4" cy="371.3" r="3.3" fill="#5c6c79"/>
<circle cx="455.1" cy="382.3" r="3.3" fill="#5c6c79"/>
<circle cx="437.9" cy="384.8" r="3.3" fill="#5c6c79"/>
<circle cx="416.8" cy="378.5" r="3.3" fill="#5c6c79"/>
<circle cx="395.7" cy="372.2" r="3.3" fill="#5c6c79"/>
<circle cx="435.6" cy="362.8" r="2.8" fill="#fff" stroke="#5c6c79" stroke-width="1.8"/>
<rect x="418" y="416.7" width="100.7" height="7.9" fill="#a9d0e6" stroke="#5c6c79" stroke-width="2.4"/>
<path d="M418,414.6 L418,435.2 M518.7,414.6 L518.7,435.2" stroke="#5c6c79" stroke-width="3"/>
<path d="M418,432 L435.8,432 M501.2,432 L518.7,432" stroke="#5c6c79" stroke-width="2.4"/>
<circle cx="435.8" cy="424.6" r="2.9" fill="#5c6c79"/>
<circle cx="435.8" cy="432" r="2.9" fill="#5c6c79"/>
<circle cx="501.2" cy="424.6" r="2.9" fill="#5c6c79"/>
<circle cx="501.2" cy="432" r="2.9" fill="#5c6c79"/>
<circle cx="468.3" cy="420.8" r="2.9" fill="#fff" stroke="#5c6c79" stroke-width="1.9"/>
<rect x="439.5" y="458.5" width="58" height="55" fill="#a8d1ea" stroke="#5c6c79" stroke-width="5"/>
<path d="M441,488.5 L496,488.5 M441,492.5 L496,492.5" stroke="#5c6c79" stroke-width="1.6"/>
<circle cx="444" cy="462" r="2.4" fill="#5c6c79"/>
<circle cx="493" cy="462" r="2.4" fill="#5c6c79"/>
<circle cx="444" cy="510" r="2.4" fill="#5c6c79"/>
<circle cx="493" cy="510" r="2.4" fill="#5c6c79"/>
<circle cx="439.5" cy="467" r="2.4" fill="#5c6c79"/>
<circle cx="497.5" cy="467" r="2.4" fill="#5c6c79"/>
<circle cx="439.5" cy="505" r="2.4" fill="#5c6c79"/>
<circle cx="497.5" cy="505" r="2.4" fill="#5c6c79"/>
<circle cx="468.5" cy="486" r="2.8" fill="#fff" stroke="#5c6c79" stroke-width="1.7"/>
</svg>
<svg style="left:74px;top:1406.3px" width="22" height="22" viewBox="0 0 22 22"><path d="M11,0 L11,22 M0,11 L22,11" stroke="#555" stroke-width="4"/></svg>
<svg style="left:124.4px;top:1399.9px" width="27" height="26.4" viewBox="0 0 27 26.4"><path d="M13.5,0 L27,12.6 L27,26.4 L16.8,26.4 L16.8,17.6 L10.6,17.6 L10.6,26.4 L0,26.4 L0,12.6 Z" fill="#636363"/><rect x="20" y="1.4" width="3.8" height="9" fill="#636363"/></svg>
<svg style="left:189.1px;top:1402.3px" width="27.5" height="21" viewBox="0 0 27.5 21"><path d="M1,2.2 Q1,1 2.2,1 L9.5,1 L11.8,3.8 L25.3,3.8 Q26.5,3.8 26.5,5 L26.5,18.8 Q26.5,20 25.3,20 L2.2,20 Q1,20 1,18.8 Z" fill="#fff" fill-opacity="0.6" stroke="#333" stroke-width="1.6" stroke-linejoin="round"/></svg>
<svg style="left:366.6px;top:1401.1px" width="26" height="27" viewBox="0 0 26 27"><path d="M1,11 L4,8.5 L10.5,8.5 L10.5,23.5 L7.5,26 L1,26 Z" fill="#fff" stroke="#333" stroke-width="1.4" stroke-linejoin="round"/>
<path d="M1,11 L7.5,11 L10.5,8.5 M7.5,11 L7.5,26" fill="none" stroke="#333" stroke-width="1.2"/>
<path d="M12.5,4 L16,1 L22.5,1 L25,4 L25,23.5 L22,26 L12.5,26 Z" fill="#fff" stroke="#333" stroke-width="1.4" stroke-linejoin="round"/>
<path d="M12.5,4 L19.5,4 L22.5,1 M19.5,4 L19.5,26" fill="none" stroke="#333" stroke-width="1.2"/></svg>
<svg style="left:671.6px;top:1403.3px" width="20.4" height="20.4" viewBox="0 0 20.4 20.4"><circle cx="10.2" cy="10.2" r="10.2" fill="#6b9ed8"/><path d="M7.2,3.5 L13.2,3.5 L13.2,9.5 L17,9.5 L10.2,17.5 L3.4,9.5 L7.2,9.5 Z" fill="#fff"/></svg>
<svg style="left:698.2px;top:1401.5px" width="27.5" height="27" viewBox="0 0 27.5 27"><path d="M1,1 L20,1 L26.5,6.5 L26.5,26 L8,26 L1,19.5 Z" fill="#fff" stroke="#2a2a2a" stroke-width="1.6" stroke-linejoin="round"/>
<path d="M1,1 L8,7.5 L8,26 M8,7.5 L26.5,7.5" fill="none" stroke="#2a2a2a" stroke-width="1.2"/>
<path d="M1.5,1.5 L14,1.5 L19.5,7 L19.5,19 L8,19 L1.5,13.5 Z" fill="#8e8e8e"/><path d="M8,7.5 L19.5,7.5 L19.5,19 L8,19 Z" fill="#9a9a9a"/>
<path d="M1.5,1.5 L8,7.5 L19.5,7.5 M8,7.5 L8,19" fill="none" stroke="#555" stroke-width="1"/></svg>
<svg style="left:2515.0px;top:1364.7px" width="30" height="19.8" viewBox="0 0 30 19.8"><path d="M1.2,18.6 L1.2,15 A13.8,13.8 0 0 1 28.8,15 L28.8,18.6 Z" fill="#fff" stroke="#2a2a2a" stroke-width="1.6" stroke-linejoin="round"/>
<path d="M6.6,15.6 A8.4,8.4 0 0 1 23.4,15.6 L17.6,15.6 A2.6,2.6 0 0 0 12.4,15.6 Z" fill="#fff" stroke="#2a2a2a" stroke-width="1.4" stroke-linejoin="round"/>
<path d="M4.6,13.4 L2.6,13.0 M5.2,11.4 L3.4,10.7 M6.2,9.6 L4.5,8.5 M7.5,8.0 L6.1,6.6 M9.1,6.7 L8.0,5.0 M10.9,5.7 L10.2,3.9 M12.9,5.1 L12.5,3.1 M15.0,4.9 L15.0,2.9 M17.1,5.1 L17.5,3.1 M19.1,5.7 L19.8,3.9 M20.9,6.7 L22.0,5.0 M22.5,8.0 L23.9,6.6 M23.8,9.6 L25.5,8.5 M24.8,11.4 L26.6,10.7 M25.4,13.4 L27.4,13.0 " stroke="#2a2a2a" stroke-width="0.8" fill="none"/></svg>
<div class="a" style="left:2512px;top:485px;width:60px;height:199px;box-sizing:border-box;border:1px solid #aaa;background:#fff;"></div>
<div class="a" style="left:2512px;top:535px;width:60px;height:1px;background:#aaa;"></div>
<div class="a" style="left:2512px;top:584.5px;width:60px;height:1px;background:#aaa;"></div>
<div class="a" style="left:2512px;top:634.5px;width:60px;height:1px;background:#aaa;"></div>
<div class="a" style="left:2512px;top:700px;width:60px;height:298px;box-sizing:border-box;border:1px solid #aaa;background:#fff;"></div>
<div class="a" style="left:2512px;top:749px;width:60px;height:1px;background:#aaa;"></div>
<div class="a" style="left:2512px;top:799px;width:60px;height:1px;background:#aaa;"></div>
<div class="a" style="left:2512px;top:848.5px;width:60px;height:1px;background:#aaa;"></div>
<div class="a" style="left:2512px;top:898px;width:60px;height:1px;background:#aaa;"></div>
<div class="a" style="left:2512px;top:948px;width:60px;height:1px;background:#aaa;"></div>
<svg style="left:2522.7px;top:498.5px" width="29.5" height="28.5" viewBox="0 0 29.5 28.5"><path d="M3,19 L13,1 Q17,0.5 21.5,3.5 L13.5,19 Z" fill="#6e6e6e"/><path d="M13.5,19 L21,7 Q25,7.5 28.5,12.5 L24,19 Z" fill="#999"/>
<path d="M9,19 L15,9 L20,19 Z" fill="#d4d4d4"/>
<rect x="0.8" y="19.2" width="28" height="8.6" rx="1.8" fill="#fff" stroke="#333" stroke-width="1.3"/><rect x="19.5" y="19.8" width="8.8" height="7.4" fill="#cfcfcf"/>
<path d="M10,19.2 L10,27.8 M19.5,19.2 L19.5,27.8" stroke="#333" stroke-width="1"/><circle cx="5.2" cy="23.5" r="1.6" fill="none" stroke="#333" stroke-width="1"/></svg>
<svg style="left:2521.9px;top:547.0px" width="29" height="29" viewBox="0 0 29 29"><path d="M17.5,5.5 L28,10.5 L28,23 L17.5,28.5 L7,23 L7,10.5 Z M7,10.5 L17.5,16 L28,10.5 M17.5,16 L17.5,28.5" fill="#fff" stroke="#2a2a2a" stroke-width="1.6" stroke-linejoin="round"/><rect x="0" y="0" width="15" height="11.5" fill="#2368d6"/><line x1="5.0" y1="0" x2="5.0" y2="11.5" stroke="#fff" stroke-opacity="0.55" stroke-width="0.9"/><line x1="0" y1="3.8" x2="15" y2="3.8" stroke="#fff" stroke-opacity="0.55" stroke-width="0.9"/><line x1="10.0" y1="0" x2="10.0" y2="11.5" stroke="#fff" stroke-opacity="0.55" stroke-width="0.9"/><line x1="0" y1="7.7" x2="15" y2="7.7" stroke="#fff" stroke-opacity="0.55" stroke-width="0.9"/></svg>
<svg style="left:2521.8px;top:597.0px" width="29.5" height="27.5" viewBox="0 0 29.5 27.5"><path d="M17.5,7 L25,11 L25,19.5 L17.5,23.5 L10,19.5 L10,11 Z M10,11 L17.5,15 L25,11 M17.5,15 L17.5,23.5" fill="#fff" stroke="#2a2a2a" stroke-width="1.5" stroke-linejoin="round"/>
<path d="M6,11 Q3.5,11 3.5,14 L3.5,16 Q3.5,18.5 1.5,18.5 Q3.5,18.5 3.5,21 L3.5,24 Q3.5,27 6,27" fill="none" stroke="#2a2a2a" stroke-width="1.4"/>
<path d="M24,3 Q26.8,3 26.8,6.5 L26.8,11 Q26.8,14.5 29,14.5 Q26.8,14.5 26.8,18 L26.8,23 Q26.8,26.5 24,26.5" fill="none" stroke="#2a2a2a" stroke-width="1.4"/><rect x="0" y="0" width="15" height="11.5" fill="#444"/><line x1="5.0" y1="0" x2="5.0" y2="11.5" stroke="#fff" stroke-opacity="0.55" stroke-width="0.9"/><line x1="0" y1="3.8" x2="15" y2="3.8" stroke="#fff" stroke-opacity="0.55" stroke-width="0.9"/><line x1="10.0" y1="0" x2="10.0" y2="11.5" stroke="#fff" stroke-opacity="0.55" stroke-width="0.9"/><line x1="0" y1="7.7" x2="15" y2="7.7" stroke="#fff" stroke-opacity="0.55" stroke-width="0.9"/></svg>
<svg style="left:2522.0px;top:646.3px" width="30" height="26" viewBox="0 0 30 26"><rect x="0" y="0" width="15" height="11.5" fill="#444"/><line x1="5.0" y1="0" x2="5.0" y2="11.5" stroke="#fff" stroke-opacity="0.55" stroke-width="0.9"/><line x1="0" y1="3.8" x2="15" y2="3.8" stroke="#fff" stroke-opacity="0.55" stroke-width="0.9"/><line x1="10.0" y1="0" x2="10.0" y2="11.5" stroke="#fff" stroke-opacity="0.55" stroke-width="0.9"/><line x1="0" y1="7.7" x2="15" y2="7.7" stroke="#fff" stroke-opacity="0.55" stroke-width="0.9"/></svg>
<span class="t tb" style="left:2520.6px;top:646.1px;font-size:25px;line-height:25px;color:#2a2a2a;font-weight:bold;">(</span>
<span class="t tb" style="left:2526.6px;top:641.2px;font-size:31px;line-height:31px;color:#2a2a2a;font-weight:bold;font-style:italic;transform:scaleX(1.0968);font-family:'Liberation Serif',serif;">x</span>
<span class="t tb" style="left:2544.0px;top:646.1px;font-size:25px;line-height:25px;color:#2a2a2a;font-weight:bold;">)</span>
<svg style="left:2521.9px;top:646.5px" width="15" height="11.5" viewBox="0 0 15 11.5"><rect x="0" y="0" width="15" height="11.5" fill="#444"/><line x1="5.0" y1="0" x2="5.0" y2="11.5" stroke="#fff" stroke-opacity="0.55" stroke-width="0.9"/><line x1="0" y1="3.8" x2="15" y2="3.8" stroke="#fff" stroke-opacity="0.55" stroke-width="0.9"/><line x1="10.0" y1="0" x2="10.0" y2="11.5" stroke="#fff" stroke-opacity="0.55" stroke-width="0.9"/><line x1="0" y1="7.7" x2="15" y2="7.7" stroke="#fff" stroke-opacity="0.55" stroke-width="0.9"/></svg>
<div class="a" style="left:2519.6px;top:707.4px;width:35px;height:35px;border-radius:5px;background:#dadada;"></div>
<div class="a" style="left:2519.6px;top:757px;width:35px;height:35px;border-radius:5px;background:#dadada;"></div>
<div class="a" style="left:2519.6px;top:806.5px;width:35px;height:35px;border-radius:5px;background:#dadada;"></div>
<div class="a" style="left:2519.6px;top:856px;width:35px;height:35px;border-radius:5px;background:#dadada;"></div>
<div class="a" style="left:2519.6px;top:905.7px;width:35px;height:35px;border-radius:5px;background:#dadada;"></div>
<div class="a" style="left:2519.6px;top:955.3px;width:35px;height:35px;border-radius:5px;background:#dadada;"></div>
<div class="a" style="left:2522.3px;top:710px;width:30px;height:30px;box-sizing:border-box;border:1.5px solid #111;background:#1b5fdb;"></div>
<span class="t tb" style="left:2524.3px;top:715.0px;font-size:23px;line-height:23px;color:#fff;font-weight:bold;transform:scaleX(0.7269);font-family:'Liberation Serif',serif;">MK</span>
<svg style="left:2522.0px;top:760.5px" width="30" height="28" viewBox="0 0 30 28"><g transform="rotate(-8 15 19)"><rect x="3" y="11.5" width="24" height="15.5" rx="1.5" fill="#2e2e2e"/>
<rect x="0.8" y="16.5" width="2.6" height="5" fill="#2e2e2e"/><rect x="26.6" y="16.5" width="2.6" height="5" fill="#2e2e2e"/>
<circle cx="10.5" cy="17.8" r="3.7" fill="#fff"/><circle cx="20" cy="17.8" r="3.7" fill="#fff"/>
<circle cx="11.3" cy="17.2" r="2.1" fill="#1b5fdb"/><circle cx="20.8" cy="17.2" r="2.1" fill="#1b5fdb"/>
<path d="M13,23.3 Q17,25.8 19,22.5" fill="none" stroke="#fff" stroke-width="1.6" stroke-linecap="round"/></g>
<path d="M13.5,11 L13.5,4.5" stroke="#2e2e2e" stroke-width="1.8"/><circle cx="13.3" cy="3.5" r="2.2" fill="#2e2e2e"/>
<path d="M9.5,1 Q8,3.5 9.5,6.5 M7.2,0.5 Q5.2,3.5 7.2,7 M17,1 Q18.5,3.5 17,6.5 M19.3,0.5 Q21.3,3.5 19.3,7" fill="none" stroke="#1b5fdb" stroke-width="1"/></svg>
<div class="a" style="left:2522.3px;top:809px;width:30px;height:30px;background:#fff;"></div>
<svg style="left:2523.8px;top:813.5px" width="27" height="21" viewBox="0 0 27 21"><path d="M0.8,10.5 L7,10.5 M4.3,6.5 L0.8,10.5 L4.3,14.5" fill="none" stroke="#2a2a2a" stroke-width="1.6"/>
<path d="M12,0.8 Q8.8,0.8 8.8,4 L8.8,7.5 Q8.8,10.5 6.8,10.5 Q8.8,10.5 8.8,13.5 L8.8,17 Q8.8,20.2 12,20.2" fill="none" stroke="#2a2a2a" stroke-width="1.6"/>
<path d="M19.5,4 L26.3,7.3 L26.3,14.3 L19.5,17.8 L12.7,14.3 L12.7,7.3 Z M12.7,7.3 L19.5,10.6 L26.3,7.3 M19.5,10.6 L19.5,17.8" fill="none" stroke="#2a2a2a" stroke-width="1.4" stroke-linejoin="round"/></svg>
<svg style="left:2523.1px;top:861.5px" width="28" height="26" viewBox="0 0 28 26"><path d="M14,0 L28,26 L21,26 Q20,19.5 13.5,17.5 Q9,16 10,11.5 Q10.5,9.5 12.5,8.5 L9.5,8.5 Z" fill="#1e9fe0"/><path d="M9,9.5 Q6,14 11,17.5 Q16,20.5 16.5,26 L0,26 Z" fill="#1e9fe0"/></svg>
<div class="a" style="left:2522.3px;top:908.2px;width:30px;height:30px;background:#4caf50;"></div>
<svg style="left:2524.8px;top:911.7px" width="25" height="23" viewBox="0 0 25 23"><path d="M1,2.5 Q7,0.5 12.5,3 L12.5,20 Q7,18 1,19.5 Z M24,2.5 Q18,0.5 12.5,3 L12.5,20 Q18,18 24,19.5 Z" fill="#fff" stroke="#4caf50" stroke-width="1.5" stroke-linejoin="round"/><path d="M0.5,21.5 Q7,20 12.5,22 Q18,20 24.5,21.5" fill="none" stroke="#4caf50" stroke-width="1.3"/></svg>
<div class="a" style="left:2522.3px;top:958px;width:30px;height:30px;box-sizing:border-box;border:1.5px solid #111;background:#1b5fdb;"></div>
<svg style="left:2524.8px;top:961.9px" width="25" height="23" viewBox="0 0 25 23"><path d="M1,2.5 Q7,0.5 12.5,3 L12.5,20 Q7,18 1,19.5 Z M24,2.5 Q18,0.5 12.5,3 L12.5,20 Q18,18 24,19.5 Z" fill="#fff" stroke="#111" stroke-width="1.5" stroke-linejoin="round"/><path d="M0.5,21.5 Q7,20 12.5,22 Q18,20 24.5,21.5" fill="none" stroke="#111" stroke-width="1.3"/></svg>
<svg style="left:0;top:0" width="2559" height="1439" viewBox="0 0 2559 1439">
<polygon points="2425.7,137 2415,151 2436.4,151" fill="#e4e8eb"/>
<polygon points="2415,346.7 2436.4,346.7 2425.7,361.3" fill="#e4e8eb"/>
<polygon points="2313.8,248.4 2328.4,237.7 2328.4,259.7" fill="#e4e8eb"/>
<polygon points="2538.6,248.4 2523,237.7 2523,259.7" fill="#e4e8eb"/>
<path d="M2393,153.5 Q2368,161 2354.5,178" fill="none" stroke="#e4e8eb" stroke-width="8.5"/>
<polygon points="2345,169.5 2347.5,188 2363.5,182.5" fill="#e4e8eb"/>
<path d="M2458.4,153.5 Q2483.4,161 2496.9,178" fill="none" stroke="#e4e8eb" stroke-width="8.5"/>
<polygon points="2506.4,169.5 2503.9,188 2487.9,182.5" fill="#e4e8eb"/>
<polygon points="2425.7,189.5 2483.3,217.5 2483.3,277.8 2425.7,306.5 2372.1,277.8 2372.1,217.5" fill="#e4e8eb" stroke="#e4e8eb" stroke-width="10" stroke-linejoin="round"/>
<polygon points="2425.7,194.5 2466,215.4 2425.7,232.5 2385.4,215.4" stroke="#fff" stroke-width="5" stroke-linejoin="round" fill="#fff"/>
<polygon points="2376,233 2413.5,251.5 2413.5,297 2376,277" stroke="#fff" stroke-width="5" stroke-linejoin="round" fill="#fff"/>
<polygon points="2438,251.5 2477.5,233 2477.5,277 2438,297" stroke="#fff" stroke-width="5" stroke-linejoin="round" fill="#fff"/>
<path d="M2372,219 L2379,210 M2479.5,219 L2472.5,210" stroke="#fff" stroke-width="2.5"/>
<ellipse cx="2425.7" cy="304" rx="9" ry="4" fill="#fff"/><circle cx="2425.7" cy="241" r="5.5" fill="#fff"/>
<line x1="2360.5" y1="288.3" x2="2423.8" y2="257.2" stroke="#3aa83a" stroke-width="1.3" stroke-opacity="0.35"/>
<line x1="2360.5" y1="288.3" x2="2376" y2="280.7" stroke="#2e9e2e" stroke-width="1.6"/>
<line x1="2360.5" y1="212.4" x2="2360.5" y2="288.3" stroke="#4a4adc" stroke-width="2.1"/>
<line x1="2360.5" y1="288.3" x2="2423.8" y2="319.5" stroke="#e23a3a" stroke-width="1.9"/>
<text x="2355" y="205" font-size="19" font-weight="bold" fill="#3a3ad8" font-family="Liberation Sans, sans-serif" textLength="11.5" lengthAdjust="spacingAndGlyphs">Z</text>
<text x="2428.5" y="331" font-size="18" font-weight="bold" fill="#e43535" font-family="Liberation Sans, sans-serif" textLength="11.5" lengthAdjust="spacingAndGlyphs">X</text>
<text x="2429" y="257.5" font-size="15" fill="#93d093" font-family="Liberation Sans, sans-serif">Y</text>
<text transform="matrix(0.89,0.445,-0.78,0.39,2414.5,205)" font-size="14.5" fill="#444" font-family="Liberation Sans, sans-serif">Top</text>
<text transform="matrix(0.89,0.445,0,1,2379,263)" font-size="14" fill="#444" font-family="Liberation Sans, sans-serif">Front</text>
<text transform="matrix(0.89,-0.445,0,1,2443.5,274)" font-size="14" fill="#444" font-family="Liberation Sans, sans-serif">Right</text>
<defs><linearGradient id="cg" x1="0" y1="0" x2="1" y2="1"><stop offset="0" stop-color="#c8c8c8"/><stop offset="1" stop-color="#8e8e8e"/></linearGradient></defs>
<polygon points="2492,334.5 2505,340.5 2505,355 2492,361.5 2479,355 2479,340.5" fill="#fff" stroke="#222" stroke-width="1.3" stroke-linejoin="round"/>
<polygon points="2479,340.5 2492,346.5 2492,361.5 2479,355" fill="url(#cg)" stroke="#222" stroke-width="1" stroke-linejoin="round"/>
<polygon points="2492,346.5 2505,340.5 2505,355 2492,361.5" fill="#dcdcdc" stroke="#222" stroke-width="1" stroke-linejoin="round"/>
<polygon points="2518.3,344.8 2529.7,344.8 2524,351" fill="#222"/>
</svg>
</body></html>
